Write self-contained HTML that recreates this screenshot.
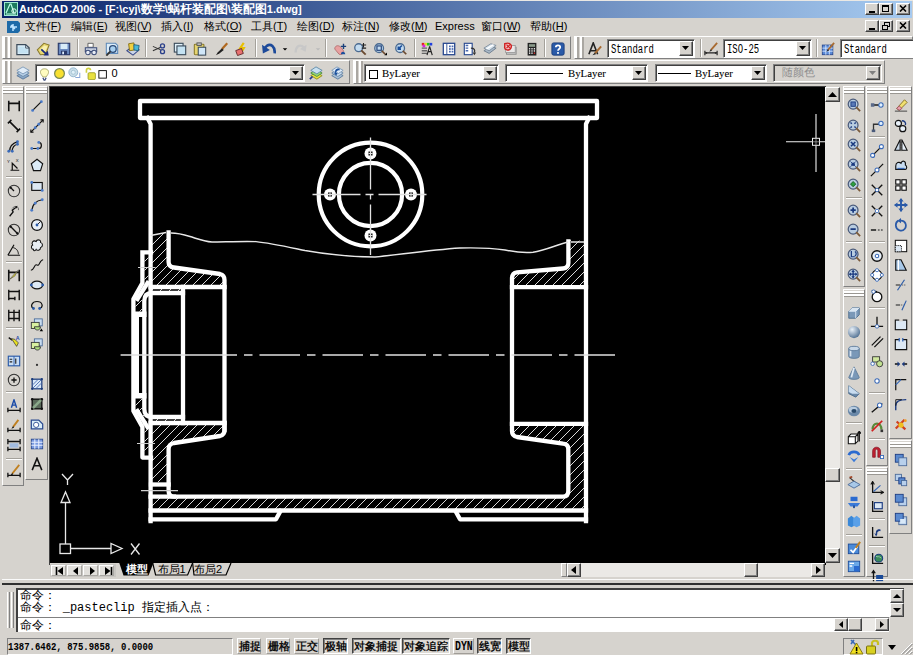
<!DOCTYPE html><html><head><meta charset="utf-8"><style>
html,body{margin:0;padding:0;}
body{width:913px;height:655px;overflow:hidden;position:relative;background:#d6d3ce;font-family:"Liberation Sans",sans-serif;}
</style></head><body>
<div style="position:absolute;left:0px;top:0px;width:913px;height:1px;background:#eae8e4"></div>
<div style="position:absolute;left:2px;top:1px;width:910px;height:16.5px;background:linear-gradient(to right,#0a246a,#a6caf0)"></div>
<svg style="position:absolute;left:4px;top:2px;" width="14" height="14" viewBox="0 0 14 14"><rect x="0.5" y="0.5" width="13" height="13" fill="#1d7a5e" stroke="#9ee8d0" stroke-width="1"/><path d="M2 11 L6 2 L7 2 L10 11" stroke="#bfffe8" fill="none" stroke-width="1.2"/><circle cx="10" cy="9" r="2.2" stroke="#eafff6" fill="none"/><line x1="2" y1="12" x2="12" y2="12" stroke="#bfffe8"/></svg>
<div style="position:absolute;left:19px;top:3.3px;font-family:'Liberation Sans', sans-serif;font-size:11px;line-height:1;color:#fff;white-space:nowrap;font-weight:bold;letter-spacing:0px">AutoCAD 2006 - [F:\cyj\<span style="font-size:12px">数学</span>\<span style="font-size:12px">蜗杆装配图</span>\<span style="font-size:12px">装配图</span>1.dwg]</div>
<div style="position:absolute;left:865px;top:3px;width:12px;height:10px;border:1px solid;border-color:#fff #404040 #404040 #fff;background:#d6d3ce;box-shadow:inset -1px -1px #808080;"></div>
<div style="position:absolute;left:869px;top:11px;width:6px;height:2px;background:#000"></div>
<div style="position:absolute;left:879px;top:3px;width:12px;height:10px;border:1px solid;border-color:#fff #404040 #404040 #fff;background:#d6d3ce;box-shadow:inset -1px -1px #808080;"></div>
<div style="position:absolute;left:882px;top:5px;width:7px;height:7px;border:1px solid #000;border-top-width:2px;box-sizing:border-box"></div>
<div style="position:absolute;left:896px;top:3px;width:12px;height:10px;border:1px solid;border-color:#fff #404040 #404040 #fff;background:#d6d3ce;box-shadow:inset -1px -1px #808080;"></div>
<svg style="position:absolute;left:899px;top:5px;" width="8" height="7" viewBox="0 0 8 7"><path d="M1 0.5 L7 6.5 M7 0.5 L1 6.5" stroke="#000" stroke-width="1.6"/></svg>
<svg style="position:absolute;left:6px;top:20px;" width="15" height="13" viewBox="0 0 15 13"><path d="M1 1 H12 L14 3 V11 L12 13 H1 Z" fill="#1d6aa8"/><path d="M4 7 H11 M7 4 V11 M5 5 L9 9" stroke="#bfe4ff" stroke-width="1.5"/></svg>
<div style="position:absolute;left:25px;top:21px;font-family:'Liberation Sans', sans-serif;font-size:11px;line-height:1;color:#000;white-space:nowrap;">文件(<u>F</u>)</div>
<div style="position:absolute;left:71px;top:21px;font-family:'Liberation Sans', sans-serif;font-size:11px;line-height:1;color:#000;white-space:nowrap;">编辑(<u>E</u>)</div>
<div style="position:absolute;left:115px;top:21px;font-family:'Liberation Sans', sans-serif;font-size:11px;line-height:1;color:#000;white-space:nowrap;">视图(<u>V</u>)</div>
<div style="position:absolute;left:161px;top:21px;font-family:'Liberation Sans', sans-serif;font-size:11px;line-height:1;color:#000;white-space:nowrap;">插入(<u>I</u>)</div>
<div style="position:absolute;left:204px;top:21px;font-family:'Liberation Sans', sans-serif;font-size:11px;line-height:1;color:#000;white-space:nowrap;">格式(<u>O</u>)</div>
<div style="position:absolute;left:251px;top:21px;font-family:'Liberation Sans', sans-serif;font-size:11px;line-height:1;color:#000;white-space:nowrap;">工具(<u>T</u>)</div>
<div style="position:absolute;left:297px;top:21px;font-family:'Liberation Sans', sans-serif;font-size:11px;line-height:1;color:#000;white-space:nowrap;">绘图(<u>D</u>)</div>
<div style="position:absolute;left:342px;top:21px;font-family:'Liberation Sans', sans-serif;font-size:11px;line-height:1;color:#000;white-space:nowrap;">标注(<u>N</u>)</div>
<div style="position:absolute;left:389px;top:21px;font-family:'Liberation Sans', sans-serif;font-size:11px;line-height:1;color:#000;white-space:nowrap;">修改(<u>M</u>)</div>
<div style="position:absolute;left:435px;top:21px;font-family:'Liberation Sans', sans-serif;font-size:11px;line-height:1;color:#000;white-space:nowrap;">Express</div>
<div style="position:absolute;left:481px;top:21px;font-family:'Liberation Sans', sans-serif;font-size:11px;line-height:1;color:#000;white-space:nowrap;">窗口(<u>W</u>)</div>
<div style="position:absolute;left:530px;top:21px;font-family:'Liberation Sans', sans-serif;font-size:11px;line-height:1;color:#000;white-space:nowrap;">帮助(<u>H</u>)</div>
<div style="position:absolute;left:865px;top:20px;width:12px;height:10px;border:1px solid;border-color:#fff #404040 #404040 #fff;background:#d6d3ce;box-shadow:inset -1px -1px #808080;"></div>
<div style="position:absolute;left:869px;top:28px;width:6px;height:2px;background:#000"></div>
<div style="position:absolute;left:879px;top:20px;width:12px;height:10px;border:1px solid;border-color:#fff #404040 #404040 #fff;background:#d6d3ce;box-shadow:inset -1px -1px #808080;"></div>
<svg style="position:absolute;left:882px;top:22px;" width="8" height="8" viewBox="0 0 8 8"><rect x="2.5" y="0.5" width="5" height="4" fill="none" stroke="#000"/><rect x="0.5" y="3.5" width="5" height="4" fill="#d6d3ce" stroke="#000"/></svg>
<div style="position:absolute;left:896px;top:20px;width:12px;height:10px;border:1px solid;border-color:#fff #404040 #404040 #fff;background:#d6d3ce;box-shadow:inset -1px -1px #808080;"></div>
<svg style="position:absolute;left:899px;top:22px;" width="8" height="7" viewBox="0 0 8 7"><path d="M1 0.5 L7 6.5 M7 0.5 L1 6.5" stroke="#000" stroke-width="1.6"/></svg>
<div style="position:absolute;left:2px;top:36px;width:567px;height:21px;border:1px solid;border-color:#fff #808080 #808080 #fff;background:#d6d3ce;"></div>
<div style="position:absolute;left:3px;top:37px;width:4px;height:21px;border-left:2px solid #fff;border-right:2px solid #aaa7a2;box-sizing:border-box"></div>
<div style="position:absolute;left:8px;top:37px;width:4px;height:21px;border-left:2px solid #fff;border-right:2px solid #aaa7a2;box-sizing:border-box"></div>
<div style="position:absolute;left:574px;top:36px;width:337px;height:21px;border:1px solid;border-color:#fff #808080 #808080 #fff;background:#d6d3ce;"></div>
<div style="position:absolute;left:575px;top:37px;width:4px;height:21px;border-left:2px solid #fff;border-right:2px solid #aaa7a2;box-sizing:border-box"></div>
<div style="position:absolute;left:580px;top:37px;width:4px;height:21px;border-left:2px solid #fff;border-right:2px solid #aaa7a2;box-sizing:border-box"></div>
<div style="position:absolute;left:2px;top:60px;width:346px;height:22px;border:1px solid;border-color:#fff #808080 #808080 #fff;background:#d6d3ce;"></div>
<div style="position:absolute;left:3px;top:61px;width:4px;height:22px;border-left:2px solid #fff;border-right:2px solid #aaa7a2;box-sizing:border-box"></div>
<div style="position:absolute;left:8px;top:61px;width:4px;height:22px;border-left:2px solid #fff;border-right:2px solid #aaa7a2;box-sizing:border-box"></div>
<div style="position:absolute;left:353px;top:60px;width:530px;height:22px;border:1px solid;border-color:#fff #808080 #808080 #fff;background:#d6d3ce;"></div>
<div style="position:absolute;left:354px;top:61px;width:4px;height:22px;border-left:2px solid #fff;border-right:2px solid #aaa7a2;box-sizing:border-box"></div>
<div style="position:absolute;left:359px;top:61px;width:4px;height:22px;border-left:2px solid #fff;border-right:2px solid #aaa7a2;box-sizing:border-box"></div>
<div style="position:absolute;left:607px;top:39px;width:86px;height:17px;border:1px solid;border-color:#808080 #fff #fff #808080;background:#fff;box-shadow:inset 1px 1px #404040;"></div>
<div style="position:absolute;left:679px;top:41px;width:12px;height:13px;border:1px solid;border-color:#fff #404040 #404040 #fff;background:#d6d3ce;box-shadow:inset -1px -1px #808080;"></div>
<svg style="position:absolute;left:682px;top:46px;" width="8" height="4" viewBox="0 0 8 4"><path d="M0 0 H7 L3.5 4 Z" fill="#000"/></svg>
<div style="position:absolute;left:611px;top:43.5px;font-family:'Liberation Mono', monospace;font-size:12px;line-height:1;color:#000;white-space:nowrap;transform:scaleX(0.745);transform-origin:0 0;">Standard</div>
<div style="position:absolute;left:723px;top:39px;width:87px;height:17px;border:1px solid;border-color:#808080 #fff #fff #808080;background:#fff;box-shadow:inset 1px 1px #404040;"></div>
<div style="position:absolute;left:796px;top:41px;width:12px;height:13px;border:1px solid;border-color:#fff #404040 #404040 #fff;background:#d6d3ce;box-shadow:inset -1px -1px #808080;"></div>
<svg style="position:absolute;left:799px;top:46px;" width="8" height="4" viewBox="0 0 8 4"><path d="M0 0 H7 L3.5 4 Z" fill="#000"/></svg>
<div style="position:absolute;left:727px;top:43.5px;font-family:'Liberation Mono', monospace;font-size:12px;line-height:1;color:#000;white-space:nowrap;transform:scaleX(0.745);transform-origin:0 0;">ISO-25</div>
<div style="position:absolute;left:840px;top:39px;width:98px;height:17px;border:1px solid;border-color:#808080 #fff #fff #808080;background:#fff;box-shadow:inset 1px 1px #404040;"></div>
<div style="position:absolute;left:924px;top:41px;width:12px;height:13px;border:1px solid;border-color:#fff #404040 #404040 #fff;background:#d6d3ce;box-shadow:inset -1px -1px #808080;"></div>
<svg style="position:absolute;left:927px;top:46px;" width="8" height="4" viewBox="0 0 8 4"><path d="M0 0 H7 L3.5 4 Z" fill="#000"/></svg>
<div style="position:absolute;left:844px;top:43.5px;font-family:'Liberation Mono', monospace;font-size:12px;line-height:1;color:#000;white-space:nowrap;transform:scaleX(0.745);transform-origin:0 0;">Standard</div>
<div style="position:absolute;left:35px;top:64px;width:268px;height:16px;border:1px solid;border-color:#808080 #fff #fff #808080;background:#fff;box-shadow:inset 1px 1px #404040;"></div>
<div style="position:absolute;left:289px;top:66px;width:12px;height:12px;border:1px solid;border-color:#fff #404040 #404040 #fff;background:#d6d3ce;box-shadow:inset -1px -1px #808080;"></div>
<svg style="position:absolute;left:292px;top:71px;" width="8" height="4" viewBox="0 0 8 4"><path d="M0 0 H7 L3.5 4 Z" fill="#000"/></svg>
<div style="position:absolute;left:364px;top:64px;width:133px;height:16px;border:1px solid;border-color:#808080 #fff #fff #808080;background:#fff;box-shadow:inset 1px 1px #404040;"></div>
<div style="position:absolute;left:483px;top:66px;width:12px;height:12px;border:1px solid;border-color:#fff #404040 #404040 #fff;background:#d6d3ce;box-shadow:inset -1px -1px #808080;"></div>
<svg style="position:absolute;left:486px;top:71px;" width="8" height="4" viewBox="0 0 8 4"><path d="M0 0 H7 L3.5 4 Z" fill="#000"/></svg>
<div style="position:absolute;left:505px;top:64px;width:141px;height:16px;border:1px solid;border-color:#808080 #fff #fff #808080;background:#fff;box-shadow:inset 1px 1px #404040;"></div>
<div style="position:absolute;left:632px;top:66px;width:12px;height:12px;border:1px solid;border-color:#fff #404040 #404040 #fff;background:#d6d3ce;box-shadow:inset -1px -1px #808080;"></div>
<svg style="position:absolute;left:635px;top:71px;" width="8" height="4" viewBox="0 0 8 4"><path d="M0 0 H7 L3.5 4 Z" fill="#000"/></svg>
<div style="position:absolute;left:655px;top:64px;width:110px;height:16px;border:1px solid;border-color:#808080 #fff #fff #808080;background:#fff;box-shadow:inset 1px 1px #404040;"></div>
<div style="position:absolute;left:751px;top:66px;width:12px;height:12px;border:1px solid;border-color:#fff #404040 #404040 #fff;background:#d6d3ce;box-shadow:inset -1px -1px #808080;"></div>
<svg style="position:absolute;left:754px;top:71px;" width="8" height="4" viewBox="0 0 8 4"><path d="M0 0 H7 L3.5 4 Z" fill="#000"/></svg>
<div style="position:absolute;left:773px;top:64px;width:107px;height:16px;border:1px solid;border-color:#808080 #fff #fff #808080;background:#d6d3ce;box-shadow:inset 1px 1px #404040;"></div>
<div style="position:absolute;left:866px;top:66px;width:12px;height:12px;border:1px solid;border-color:#fff #404040 #404040 #fff;background:#d6d3ce;box-shadow:inset -1px -1px #808080;"></div>
<svg style="position:absolute;left:869px;top:71px;" width="8" height="4" viewBox="0 0 8 4"><path d="M0 0 H7 L3.5 4 Z" fill="#808080"/></svg>
<div style="position:absolute;left:369px;top:69.5px;width:9px;height:9px;border:1.2px solid #000;box-sizing:border-box;background:#fff"></div>
<div style="position:absolute;left:382px;top:68px;font-family:'Liberation Serif', serif;font-size:10.8px;line-height:1;color:#000;white-space:nowrap;color:#000;-webkit-text-stroke:0.1px #000">ByLayer</div>
<div style="position:absolute;left:510px;top:72.5px;width:53px;height:1px;background:#000"></div>
<div style="position:absolute;left:568px;top:68px;font-family:'Liberation Serif', serif;font-size:10.8px;line-height:1;color:#000;white-space:nowrap;color:#000;-webkit-text-stroke:0.1px #000">ByLayer</div>
<div style="position:absolute;left:658px;top:72.5px;width:33px;height:1px;background:#000"></div>
<div style="position:absolute;left:695px;top:68px;font-family:'Liberation Serif', serif;font-size:10.8px;line-height:1;color:#000;white-space:nowrap;color:#000;-webkit-text-stroke:0.1px #000">ByLayer</div>
<div style="position:absolute;left:782px;top:67px;font-family:'Liberation Sans', sans-serif;font-size:11px;line-height:1;color:#909090;white-space:nowrap;">随颜色</div>
<svg style="position:absolute;left:16.0px;top:42.0px" width="14" height="14" viewBox="0 0 16 16"><path d="M1 3 H11 L15 6.5 V14.5 H1Z" fill="#e2f2fb" stroke="#3c4c5c" stroke-width="1.4"/><path d="M2.5 5 H10 V8 H13.5 V13 H2.5Z" fill="#c4e2f2"/><path d="M11 3 V7 H15" fill="none" stroke="#3c4c5c"/></svg>
<svg style="position:absolute;left:36.0px;top:42.0px" width="14" height="14" viewBox="0 0 16 16"><path d="M1.5 9 L9 1.5 L15 3.5 L11 14 L5 14.5Z" fill="#e8d870" stroke="#8a7a30" stroke-width="1.2"/><path d="M4 9.5 L9.5 4 L13 5 L10 12Z" fill="#f8f0b0"/><path d="M6 8.5 L11.5 13.5" stroke="#1a2a7a" stroke-width="2"/><path d="M14.5 15.5 L8.5 15.5 L13.5 10Z" fill="#1a2a7a"/></svg>
<svg style="position:absolute;left:57.0px;top:42.0px" width="14" height="14" viewBox="0 0 16 16"><rect x="1.5" y="1.5" width="13" height="13" fill="#6a8ac0" stroke="#2a3a6a" stroke-width="1.3"/><rect x="4" y="2" width="8" height="6" fill="#d8ecf8"/><rect x="4.5" y="10" width="7" height="4.5" fill="#2a3a6a"/><rect x="6" y="11" width="2" height="3" fill="#e0f0ff"/></svg>
<svg style="position:absolute;left:84.0px;top:42.0px" width="14" height="14" viewBox="0 0 16 16"><path d="M4.5 1.5 H10.5 V6 H4.5Z" fill="#fff" stroke="#555"/><path d="M1.5 6.5 H14.5 V11 H1.5Z" fill="#c8d0e0" stroke="#3c4c78" stroke-width="1.2"/><circle cx="4.5" cy="12" r="2.6" fill="#e8ecf4" stroke="#3c4c78" stroke-width="1.2"/><circle cx="11.5" cy="12" r="2.6" fill="#e8ecf4" stroke="#3c4c78" stroke-width="1.2"/></svg>
<svg style="position:absolute;left:105.0px;top:42.0px" width="14" height="14" viewBox="0 0 16 16"><path d="M1.5 1.5 H12 L14.5 4 V13 H1.5Z" fill="#dcecf8" stroke="#5c88b8" stroke-width="1.2"/><circle cx="9" cy="8" r="3.8" fill="#a8d0f0" stroke="#2c4c78" stroke-width="1.5"/><path d="M6.3 10.7 L1.5 15.5" stroke="#333" stroke-width="2.2"/></svg>
<svg style="position:absolute;left:126.0px;top:42.0px" width="14" height="14" viewBox="0 0 16 16"><path d="M1 10 L8 5 L15 9 L8 15Z" fill="#c8d4e8" stroke="#3a4a88" stroke-width="1.2"/><path d="M3 2 L9 1 L10 9 L4 10Z" fill="#f0d040" stroke="#806a10"/><path d="M9 3 L15 4 L14 10 L9 9Z" fill="#48b8d8" stroke="#20607a"/></svg>
<svg style="position:absolute;left:152.0px;top:42.0px" width="14" height="14" viewBox="0 0 16 16"><path d="M1 5 L10 9 M1 10 L10 6" stroke="#333" stroke-width="1.2"/><circle cx="12" cy="4.5" r="2.3" fill="none" stroke="#2a3f8a" stroke-width="1.5"/><circle cx="12" cy="11" r="2.3" fill="none" stroke="#2a3f8a" stroke-width="1.5"/></svg>
<svg style="position:absolute;left:173.0px;top:42.0px" width="14" height="14" viewBox="0 0 16 16"><rect x="1.5" y="1.5" width="10" height="10" fill="#e2f2fb" stroke="#3c4c5c" stroke-width="1.3"/><rect x="4.5" y="4.5" width="10" height="10" fill="#c4e2f2" stroke="#3c4c5c" stroke-width="1.3"/></svg>
<svg style="position:absolute;left:193.0px;top:42.0px" width="14" height="14" viewBox="0 0 16 16"><rect x="1.5" y="2.5" width="11" height="12" rx="1" fill="#e6d470" stroke="#8a7a28" stroke-width="1.2"/><rect x="4.5" y="1" width="5" height="3" fill="#bbb" stroke="#555"/><rect x="6" y="6" width="8.5" height="9" fill="#d0e6f8" stroke="#3c4c5c" stroke-width="1.2"/></svg>
<svg style="position:absolute;left:214.5px;top:42.0px" width="14" height="14" viewBox="0 0 16 16"><path d="M14 1.5 L8 8" stroke="#b06820" stroke-width="2.5"/><path d="M8 7 L3 12 L1 15 L5 13 L10 9Z" fill="#222"/></svg>
<svg style="position:absolute;left:235.0px;top:42.0px" width="14" height="14" viewBox="0 0 16 16"><path d="M10 1 L6 7 H10 L7 12" stroke="#e8c000" stroke-width="2.5" fill="none"/><rect x="1.5" y="8.5" width="7" height="6" fill="#e87070" stroke="#6a3030" transform="rotate(-20 5 11)"/></svg>
<svg style="position:absolute;left:261.5px;top:42.0px" width="14" height="14" viewBox="0 0 16 16"><path d="M14.5 13 C15 5 10 1.5 5.5 4.5 L3.5 6.5" stroke="#1d4a9a" stroke-width="3" fill="none"/><path d="M0 3 L1 13 L9 9Z" fill="#1d4a9a"/></svg>
<svg style="position:absolute;left:293.0px;top:42.0px" width="14" height="14" viewBox="0 0 16 16"><path d="M3 12 C3 5 7 3 11 5 L13 7" stroke="#c8c8c8" stroke-width="2.6" fill="none"/><path d="M15.5 3 L14.5 11 L8 8Z" fill="#c8c8c8"/></svg>
<svg style="position:absolute;left:333.0px;top:42.0px" width="14" height="14" viewBox="0 0 16 16"><path d="M2 8 C2 4 6 3 9 6 L12 10 C13 13 10 15 7 14 Z" fill="#e8a0a0" stroke="#b07070"/><path d="M12 2 V8 M9 5 H15" stroke="#1a3f7a" stroke-width="1.6"/><path d="M11 11 C13 11 14 12 14 14 H9 C9 12 10 11 11 11Z" fill="#1a4f9c"/></svg>
<svg style="position:absolute;left:353.0px;top:42.0px" width="14" height="14" viewBox="0 0 16 16"><circle cx="6.5" cy="6.5" r="4.5" fill="#c4dcf0" stroke="#4a6a90" stroke-width="1.5"/><path d="M9.5 9.5 L14.5 14.5" stroke="#6a4a30" stroke-width="2.2"/><path d="M12 1 V6 M10 3.5 H15 M10 7 H15" stroke="#222" stroke-width="1.2"/></svg>
<svg style="position:absolute;left:373.0px;top:42.0px" width="14" height="14" viewBox="0 0 16 16"><circle cx="7" cy="7" r="5" fill="#c4dcf0" stroke="#4a6a90" stroke-width="1.5"/><rect x="4.5" y="4.5" width="5" height="5" fill="none" stroke="#2a4a80" stroke-width="1.4"/><path d="M10 10 L14 14" stroke="#6a4a30" stroke-width="2"/><path d="M13 15 L16 15 L16 12Z" fill="#000"/></svg>
<svg style="position:absolute;left:393.5px;top:42.0px" width="14" height="14" viewBox="0 0 16 16"><circle cx="7" cy="7" r="5" fill="#c4dcf0" stroke="#4a6a90" stroke-width="1.5"/><path d="M9 4 L5 8 M5 5 V8 H8" stroke="#1a4f9c" stroke-width="2" fill="none"/><path d="M10 10 L14 14" stroke="#6a4a30" stroke-width="2"/></svg>
<svg style="position:absolute;left:420.0px;top:42.0px" width="14" height="14" viewBox="0 0 16 16"><rect x="2" y="1" width="3" height="3" fill="#e02020"/><rect x="5" y="1" width="3" height="3" fill="#e0e020"/><rect x="8" y="1" width="3" height="3" fill="#20c020"/><rect x="11" y="1" width="3" height="3" fill="#2040e0"/><rect x="3" y="3" width="3" height="3" fill="#e020e0"/><path d="M2 7 H8 M2 10 H8 M2 13 H8" stroke="#666" stroke-width="1.5"/><path d="M11 5 L8 15 M11 5 L14 15 M9 11 H13" stroke="#222" stroke-width="1.3"/></svg>
<svg style="position:absolute;left:442.0px;top:42.0px" width="14" height="14" viewBox="0 0 16 16"><rect x="1.5" y="1.5" width="13" height="13" fill="#fff" stroke="#2a4a90" stroke-width="1.5"/><path d="M5.5 2 V14" stroke="#2a4a90"/><rect x="8" y="4" width="2" height="2" fill="#4a6ab0"/><rect x="11" y="4" width="2" height="2" fill="#4a6ab0"/><rect x="8" y="7" width="2" height="2" fill="#4a6ab0"/><rect x="11" y="7" width="2" height="2" fill="#4a6ab0"/><rect x="8" y="10" width="2" height="2" fill="#4a6ab0"/><rect x="11" y="10" width="2" height="2" fill="#4a6ab0"/></svg>
<svg style="position:absolute;left:463.0px;top:42.0px" width="14" height="14" viewBox="0 0 16 16"><rect x="1.5" y="1.5" width="9" height="13" fill="#fff" stroke="#2a4a90" stroke-width="1.3"/><path d="M3 4 H6 M3 7 H6 M3 10 H6" stroke="#4a6ab0" stroke-width="1.5"/><path d="M9 7 C13 7 14 9 13 12" stroke="#333" stroke-width="1.5" fill="none"/><path d="M11 12 H15 L13 15Z" fill="#333"/></svg>
<svg style="position:absolute;left:483.0px;top:42.0px" width="14" height="14" viewBox="0 0 16 16"><path d="M1 10 L9 5 L15 7 L7 13Z" fill="#a8b8c8" stroke="#6a7a8a"/><path d="M1 7 L9 2 L15 4 L7 10Z" fill="#d8e4ee" stroke="#7a8a9a"/><path d="M4 8 L12 3" stroke="#fff" stroke-width="1.5"/></svg>
<svg style="position:absolute;left:503.0px;top:42.0px" width="14" height="14" viewBox="0 0 16 16"><rect x="4" y="6" width="11" height="8" fill="#c8c8c8" stroke="#888"/><rect x="3" y="4" width="11" height="8" fill="#e8e8e8" stroke="#999"/><path d="M2 2 C7 0 11 3 9 7 C7 11 1 9 2 5Z" fill="#f0c0c0" stroke="#d02020" stroke-width="1.6"/><path d="M4 3 L8 7 M8 3 L4 7" stroke="#d02020" stroke-width="1.3"/></svg>
<svg style="position:absolute;left:525.0px;top:42.0px" width="14" height="14" viewBox="0 0 16 16"><rect x="3" y="1" width="10" height="14.5" fill="#222"/><rect x="4.5" y="2.5" width="7" height="3" fill="#8a9a8a"/><g fill="#fff"><rect x="4.5" y="7" width="1.5" height="1.5"/><rect x="7.25" y="7" width="1.5" height="1.5"/><rect x="10" y="7" width="1.5" height="1.5"/><rect x="4.5" y="9.5" width="1.5" height="1.5"/><rect x="7.25" y="9.5" width="1.5" height="1.5"/><rect x="10" y="9.5" width="1.5" height="1.5"/><rect x="4.5" y="12" width="1.5" height="1.5"/><rect x="7.25" y="12" width="1.5" height="1.5"/></g><rect x="10" y="12" width="1.5" height="1.5" fill="#e03030"/></svg>
<svg style="position:absolute;left:551.0px;top:42.0px" width="14" height="14" viewBox="0 0 16 16"><rect x="1" y="1" width="14" height="14" rx="2" fill="#2a5aa8" stroke="#183a78"/><path d="M5.5 6 C5.5 3 10.5 3 10.5 6 C10.5 8 8 8 8 10" stroke="#fff" stroke-width="2" fill="none"/><rect x="7" y="11.5" width="2" height="2" fill="#fff"/></svg>
<svg style="position:absolute;left:279.0px;top:43.0px" width="12" height="12" viewBox="0 0 16 16"><path d="M5 7 H11 L8 10Z" fill="#000"/></svg>
<svg style="position:absolute;left:312.0px;top:43.0px" width="12" height="12" viewBox="0 0 16 16"><path d="M5 7 H11 L8 10Z" fill="#bbb"/></svg>
<div style="position:absolute;left:77px;top:39px;width:2px;height:18px;border-left:1px solid #a4a19b;border-right:1px solid #fff;box-sizing:border-box"></div>
<div style="position:absolute;left:145px;top:39px;width:2px;height:18px;border-left:1px solid #a4a19b;border-right:1px solid #fff;box-sizing:border-box"></div>
<div style="position:absolute;left:254.5px;top:39px;width:2px;height:18px;border-left:1px solid #a4a19b;border-right:1px solid #fff;box-sizing:border-box"></div>
<div style="position:absolute;left:325px;top:39px;width:2px;height:18px;border-left:1px solid #a4a19b;border-right:1px solid #fff;box-sizing:border-box"></div>
<div style="position:absolute;left:414px;top:39px;width:2px;height:18px;border-left:1px solid #a4a19b;border-right:1px solid #fff;box-sizing:border-box"></div>
<div style="position:absolute;left:544px;top:39px;width:2px;height:18px;border-left:1px solid #a4a19b;border-right:1px solid #fff;box-sizing:border-box"></div>
<svg style="position:absolute;left:588.0px;top:42.0px" width="14" height="14" viewBox="0 0 16 16"><path d="M1 14 L6 1 L11 14 M3 10 H9" stroke="#222" stroke-width="1.8" fill="none"/><path d="M15 5 L8 13" stroke="#a86a30" stroke-width="2.2"/><path d="M8 12 L5 15 L9 14Z" fill="#222"/></svg>
<svg style="position:absolute;left:704.0px;top:42.0px" width="14" height="14" viewBox="0 0 16 16"><path d="M1 10 V15 M15 10 V15 M1 12.5 H15" stroke="#222" stroke-width="1.3"/><path d="M2 11 L4 12.5 L2 14Z M14 11 L12 12.5 L14 14Z" fill="#222"/><path d="M15 1 L8 9" stroke="#a86a30" stroke-width="2"/><path d="M8 8 L6 11 L9 10Z" fill="#222"/></svg>
<svg style="position:absolute;left:821.0px;top:42.0px" width="14" height="14" viewBox="0 0 16 16"><rect x="1.5" y="3.5" width="12" height="11" fill="#5a8ad8" stroke="#2a4a90"/><path d="M1.5 7 H13.5 M1.5 10.5 H13.5 M5.5 3.5 V14.5 M9.5 3.5 V14.5" stroke="#d8e8ff"/><path d="M15 1 L8 9" stroke="#a86a30" stroke-width="2"/><path d="M8 8 L6 11 L9 10Z" fill="#222"/></svg>
<div style="position:absolute;left:700px;top:39px;width:2px;height:18px;border-left:1px solid #a4a19b;border-right:1px solid #fff;box-sizing:border-box"></div>
<div style="position:absolute;left:816px;top:39px;width:2px;height:18px;border-left:1px solid #a4a19b;border-right:1px solid #fff;box-sizing:border-box"></div>
<svg style="position:absolute;left:16.0px;top:66.0px" width="14" height="14" viewBox="0 0 16 16"><path d="M1 11 L8 7 L15 11 L8 15Z" fill="#8aa8c8" stroke="#5a7898"/><path d="M1 8 L8 4 L15 8 L8 12Z" fill="#b8d0e8" stroke="#6a88a8"/><path d="M1 5 L8 1 L15 5 L8 9Z" fill="#e0ecf8" stroke="#7a98b8"/></svg>
<svg style="position:absolute;left:38.0px;top:67.5px" width="13" height="13" viewBox="0 0 16 16"><path d="M8 1 C3 1 2 5 4 8 L6 11 H10 L12 8 C14 5 13 1 8 1Z" fill="#fffcc0" stroke="#a0a060"/><path d="M6 12 L7.5 15 H8.5 L10 12" stroke="#3a4a7a" stroke-width="1.6" fill="none"/></svg>
<svg style="position:absolute;left:52.5px;top:67.0px" width="13" height="13" viewBox="0 0 16 16"><circle cx="8" cy="8" r="6" fill="#f8e030" stroke="#7a8a50" stroke-width="1.5"/></svg>
<svg style="position:absolute;left:67.5px;top:67.0px" width="13" height="13" viewBox="0 0 16 16"><circle cx="6.5" cy="6.5" r="5.5" fill="#c8dce8" stroke="#8ab0c8"/><circle cx="6.5" cy="6.5" r="2.5" fill="#e0f0f8" stroke="#a0c0d0"/><path d="M9 13 H14.5 V7" stroke="#8aa8d8" stroke-width="1.3" fill="none"/></svg>
<svg style="position:absolute;left:84.0px;top:67.0px" width="13" height="13" viewBox="0 0 16 16"><path d="M3 7 V4 C3 1 8 1 8 4" stroke="#d0d040" stroke-width="2" fill="none"/><rect x="5" y="7" width="9" height="8.5" rx="1.5" fill="#e8e040" stroke="#9a9a20"/></svg>
<svg style="position:absolute;left:97.0px;top:68.0px" width="12" height="12" viewBox="0 0 16 16"><rect x="2.5" y="3.5" width="10" height="10" fill="#fff" stroke="#000" stroke-width="1.2"/></svg>
<div style="position:absolute;left:111.5px;top:68px;font-family:'Liberation Sans', sans-serif;font-size:11px;line-height:1;color:#000;white-space:nowrap;">0</div>
<svg style="position:absolute;left:309.0px;top:66.0px" width="14" height="14" viewBox="0 0 16 16"><path d="M2 11 L8 7 L15 11 L9 15Z" fill="#e8e040" stroke="#8a8a20"/><path d="M2 8 L8 4 L15 8 L9 12Z" fill="#98d870" stroke="#4a8a40"/><path d="M2 5 L8 1 L15 5 L9 9Z" fill="#c8e0f0" stroke="#5a88a8"/><path d="M1 15 L4 12" stroke="#2a3a8a" stroke-width="2"/></svg>
<svg style="position:absolute;left:330.0px;top:66.0px" width="14" height="14" viewBox="0 0 16 16"><path d="M2 11 L8 7 L15 11 L9 15Z" fill="#a8c0d8" stroke="#5a7898"/><path d="M2 8 L8 4 L15 8 L9 12Z" fill="#c8dcf0" stroke="#6a88a8"/><path d="M2 5 L8 1 L15 5 L9 9Z" fill="#e0ecf8" stroke="#7a98b8"/><path d="M11 3 C7 2 5 5 6 8 L4 7 L7 11 L9 7 L7 8 C7 6 9 4 11 5Z" fill="#1a4f9c"/></svg>
<div style="position:absolute;left:49px;top:86px;width:777px;height:478.5px;background:#000;border-left:1px solid #404040;border-top:1px solid #404040;box-sizing:border-box"></div>
<svg style="position:absolute;left:50px;top:87px" width="775" height="476" viewBox="50 87 775 476"><defs><pattern id="hp" patternUnits="userSpaceOnUse" width="9" height="9" patternTransform="translate(1,0)"><path d="M-1,10 L10,-1 M-10,10 L1,-1 M8,10 L19,-1" stroke="#d8d8d8" stroke-width="1"/></pattern></defs><polygon points="150.6,236 168.6,232 168.6,263 173,267 222,274 224.5,279 224.5,287 150.6,287" fill="url(#hp)"/><polygon points="151,288 183,288 183,292 151,292" fill="url(#hp)"/><polygon points="151,418 183,418 183,422 151,422" fill="url(#hp)"/><polygon points="150.6,423 224.5,423 224.5,431 222,436 173,443 168.6,447 168.6,482 150.6,482" fill="url(#hp)"/><polygon points="150.6,496.6 586,496.6 586,510.5 150.6,510.5" fill="url(#hp)"/><polygon points="512,424 586,424 586,497 568.3,497 568.3,449 563,443.6 517,437 512,431" fill="url(#hp)"/><polygon points="568.4,240 586,241 586,287 512,287 512,278 517,272.4 563,268.5 568.4,263" fill="url(#hp)"/><polygon points="144.5,255 148.5,255 148.5,283 146,290 142,300 142,311.5 135.5,311.5 135.5,299 144.5,283" fill="url(#hp)"/><polygon points="144.5,455 148.5,455 148.5,427 146,420 142,410 142,398.5 135.5,398.5 135.5,411 144.5,427" fill="url(#hp)"/><path d="M140,101 H597 V118 H140 Z" stroke="#fff" fill="none" stroke-width="4.3" stroke-linejoin="round" stroke-linecap="square"/><path d="M147.5,118 L150.6,124 V521" stroke="#fff" fill="none" stroke-width="4.3" stroke-linejoin="round" stroke-linecap="square"/><path d="M589,118 L586,124 V521" stroke="#fff" fill="none" stroke-width="4.3" stroke-linejoin="round" stroke-linecap="square"/><path d="M150.6,519.3 H276 L280.5,511" stroke="#fff" fill="none" stroke-width="4.3" stroke-linejoin="round" stroke-linecap="square"/><path d="M455.5,511 L460,519.3 H586" stroke="#fff" fill="none" stroke-width="4.3" stroke-linejoin="round" stroke-linecap="square"/><path d="M150.6,510.5 H586" stroke="#fff" fill="none" stroke-width="4.3" stroke-linejoin="round" stroke-linecap="square"/><path d="M224.5,423 V430 Q224.5,435 220,436 L174,443 Q168.6,444 168.6,449 V491 Q168.6,496.6 174,496.6 H563 Q568.3,496.6 568.3,491 V449 Q568.3,444 563,443.6 L517,437 Q512,436 512,431 V278 Q512.3,273 517,272.4 L563,268.5 Q568.4,268 568.4,263 V241.5" stroke="#fff" fill="none" stroke-width="4.3" stroke-linejoin="round" stroke-linecap="square"/><path d="M168.6,232.5 V262 Q168.6,267 174,267.5 L220,274 Q224.5,275 224.5,280 V430" stroke="#fff" fill="none" stroke-width="4.3" stroke-linejoin="round" stroke-linecap="square"/><path d="M150.6,287 H224.5" stroke="#fff" fill="none" stroke-width="4.3" stroke-linejoin="round" stroke-linecap="square"/><path d="M150.6,423 H224.5" stroke="#fff" fill="none" stroke-width="4.3" stroke-linejoin="round" stroke-linecap="square"/><path d="M512,287.2 H586" stroke="#fff" fill="none" stroke-width="4.3" stroke-linejoin="round" stroke-linecap="square"/><path d="M512,423.8 H586" stroke="#fff" fill="none" stroke-width="4.3" stroke-linejoin="round" stroke-linecap="square"/><path d="M183,287 V423" stroke="#fff" fill="none" stroke-width="4.3" stroke-linejoin="round" stroke-linecap="square"/><path d="M183,293 H152 Q144.3,293 144.3,301 V409 Q144.3,417 152,417 H183" stroke="#fff" fill="none" stroke-width="4.3" stroke-linejoin="round" stroke-linecap="square"/><path d="M142.4,252.4 H151 M142.4,252.4 V283 L133.4,299 V411 L142.4,427 V457.6 H151" stroke="#fff" fill="none" stroke-width="4.3" stroke-linejoin="round" stroke-linecap="square"/><path d="M147.5,283 L137.5,299" stroke="#fff" fill="none" stroke-width="4.3" stroke-linejoin="round" stroke-linecap="square"/><path d="M147.5,427 L137.5,411" stroke="#fff" fill="none" stroke-width="4.3" stroke-linejoin="round" stroke-linecap="square"/><path d="M151,484.5 H168.6" stroke="#fff" fill="none" stroke-width="4.3" stroke-linejoin="round" stroke-linecap="square"/><path d="M150.6,496.6 H174" stroke="#fff" fill="none" stroke-width="4.3" stroke-linejoin="round" stroke-linecap="square"/><path d="M137,314 V396" stroke="#fff" stroke-width="4"/><path d="M132,314.2 H146.5 M132,395.8 H146.5" stroke="#fff" stroke-width="5.5"/><circle cx="370.5" cy="194.5" r="51.8" stroke="#fff" fill="none" stroke-width="4.2"/><circle cx="370.5" cy="194.5" r="31.6" stroke="#fff" fill="none" stroke-width="4.2"/><circle cx="370.5" cy="153.5" r="6" fill="#fff"/><rect x="368.5" y="151.5" width="4" height="4" fill="#000"/><path d="M368.5,153.5 H372.5 M370.5,151.5 V155.5" stroke="#fff" stroke-width="0.9"/><circle cx="370.5" cy="235.5" r="6" fill="#fff"/><rect x="368.5" y="233.5" width="4" height="4" fill="#000"/><path d="M368.5,235.5 H372.5 M370.5,233.5 V237.5" stroke="#fff" stroke-width="0.9"/><circle cx="330.0" cy="194.5" r="6" fill="#fff"/><rect x="328.0" y="192.5" width="4" height="4" fill="#000"/><path d="M328.0,194.5 H332.0 M330.0,192.5 V196.5" stroke="#fff" stroke-width="0.9"/><circle cx="411.0" cy="194.5" r="6" fill="#fff"/><rect x="409.0" y="192.5" width="4" height="4" fill="#000"/><path d="M409.0,194.5 H413.0 M411.0,192.5 V196.5" stroke="#fff" stroke-width="0.9"/><path d="M370.5,137.5 V255" stroke="#e0e0e0" stroke-width="1.3" fill="none" stroke-dasharray="52 5 5 5" stroke-dashoffset="0"/><path d="M312.5,194.5 H430" stroke="#e0e0e0" stroke-width="1.3" fill="none" stroke-dasharray="48 5 8 5" stroke-dashoffset="0"/><path d="M150.6,235.5 L166,232.5 M171,233 C178,233 182,234 190,236.5 C198,239 204,241.5 212,242 C222,242 245,241 256,241.6 C270,243 288,247 305,250.5 C325,254 345,257 375,257 C400,254.5 430,250 460,248 C480,247.5 495,248.5 505,250 C515,252 525,253 533,252.2 C545,250.5 556,245 568,242 M571,242 H584" stroke="#e8e8e8" stroke-width="1.4" fill="none"/><path d="M120.6,355 H236" stroke="#e0e0e0" stroke-width="1.3" fill="none"/><path d="M236,355 H616" stroke="#e0e0e0" stroke-width="1.3" fill="none" stroke-dasharray="40.5 7 8.5 7" stroke-dashoffset="39.5"/><path d="M138,267.5 H155.5 M137,443.5 H155 M141,490.6 H178" stroke="#d0d0d0" stroke-width="1.2"/><rect x="60" y="544" width="10.5" height="9.5" stroke="#e8e8e8" stroke-width="1.3" fill="none"/><path d="M65.5,544 V502.5 M61,502.5 H70 L65.5,492 Z" stroke="#e8e8e8" stroke-width="1.3" fill="none"/><path d="M70.5,548.5 H111 M111,543.5 V553.5 L122,548.5 Z" stroke="#e8e8e8" stroke-width="1.3" fill="none"/><path d="M62,474 L67.5,480 L73,474 M67.5,480 V485" stroke="#e8e8e8" stroke-width="1.3" fill="none"/><path d="M131,543.5 L139.5,554.5 M139.5,543.5 L131,554.5" stroke="#e8e8e8" stroke-width="1.3" fill="none"/><path d="M816,114 V138.5 M816,145.5 V172 M786,141.8 H812.5 M819.5,141.8 H826" stroke="#f0f0f0" stroke-width="1.1"/><rect x="812.5" y="138.3" width="7" height="7" stroke="#f0f0f0" stroke-width="1" fill="none"/><path d="M816,138.3 V145.3 M812.5,141.8 H819.5" stroke="#a0a0a0" stroke-width="0.8"/></svg>
<div style="position:absolute;left:2px;top:86px;width:20px;height:398px;border:1px solid;border-color:#fff #808080 #808080 #fff;background:#d6d3ce;"></div>
<div style="position:absolute;left:3px;top:88px;width:20px;height:3px;border-top:2px solid #fff;border-bottom:1px solid #9a9792;box-sizing:border-box"></div>
<div style="position:absolute;left:3px;top:91px;width:20px;height:3px;border-top:2px solid #fff;border-bottom:1px solid #9a9792;box-sizing:border-box"></div>
<div style="position:absolute;left:25px;top:86px;width:21px;height:392px;border:1px solid;border-color:#fff #808080 #808080 #fff;background:#d6d3ce;"></div>
<div style="position:absolute;left:26px;top:88px;width:21px;height:3px;border-top:2px solid #fff;border-bottom:1px solid #9a9792;box-sizing:border-box"></div>
<div style="position:absolute;left:26px;top:91px;width:21px;height:3px;border-top:2px solid #fff;border-bottom:1px solid #9a9792;box-sizing:border-box"></div>
<svg style="position:absolute;left:6.5px;top:99.0px" width="14" height="14" viewBox="0 0 16 16"><path d="M2 2 V14 M14 2 V14 M2 5 H14" stroke="#111" stroke-width="1.8"/></svg>
<svg style="position:absolute;left:6.5px;top:118.5px" width="14" height="14" viewBox="0 0 16 16"><path d="M1 5 L5 1 M11 15 L15 11 M3 3 L13 13" stroke="#111" stroke-width="1.8"/></svg>
<svg style="position:absolute;left:6.5px;top:138.5px" width="14" height="14" viewBox="0 0 16 16"><path d="M3 14 C3 8 6 5 12 3 M6 14 C6 10 8 7 12 6" stroke="#111" stroke-width="1.4" fill="none"/><circle cx="2" cy="14" r="1.6" fill="#3a6ab8"/><circle cx="12" cy="3" r="1.6" fill="#3a6ab8"/><circle cx="6" cy="14" r="1.6" fill="#3a6ab8"/><circle cx="12" cy="6" r="1.6" fill="#3a6ab8"/></svg>
<svg style="position:absolute;left:6.5px;top:158.3px" width="14" height="14" viewBox="0 0 16 16"><path d="M4 14 H14 M6 14 V6 L12 12" stroke="#111" stroke-width="1.4" fill="none"/><text x="0" y="6" font-size="5" fill="#111">Y</text><text x="10" y="5" font-size="5" fill="#111">X</text></svg>
<div style="position:absolute;left:5.5px;top:176px;width:16px;height:2px;border-top:1px solid #a4a19b;border-bottom:1px solid #fff;box-sizing:border-box"></div>
<svg style="position:absolute;left:6.5px;top:183.8px" width="14" height="14" viewBox="0 0 16 16"><circle cx="8" cy="8" r="6.5" fill="none" stroke="#333" stroke-width="1.2"/><path d="M4 4 L8 8" stroke="#111" stroke-width="1.5"/><path d="M3 3 L6 4 L4 6Z" fill="#111"/></svg>
<svg style="position:absolute;left:6.5px;top:203.5px" width="14" height="14" viewBox="0 0 16 16"><path d="M3 14 L7 9 L6 7 L10 4" stroke="#111" stroke-width="1.5" fill="none"/><path d="M6 5 C9 1 14 3 13 7" stroke="#555" fill="none"/><path d="M9 3 L12 2 L11 5Z" fill="#111"/></svg>
<svg style="position:absolute;left:6.5px;top:223.0px" width="14" height="14" viewBox="0 0 16 16"><circle cx="8" cy="8" r="6.5" fill="none" stroke="#333" stroke-width="1.2"/><path d="M3.5 3.5 L12.5 12.5" stroke="#111" stroke-width="1.5"/><path d="M3 3 L6 4 L4 6Z M13 13 L10 12 L12 10Z" fill="#111"/></svg>
<svg style="position:absolute;left:6.5px;top:243.0px" width="14" height="14" viewBox="0 0 16 16"><path d="M1 14 H15 M1 14 L8 2" stroke="#111" stroke-width="1.4"/><path d="M6 5 C11 6 13 9 13 13" stroke="#111" fill="none"/></svg>
<div style="position:absolute;left:5.5px;top:261px;width:16px;height:2px;border-top:1px solid #a4a19b;border-bottom:1px solid #fff;box-sizing:border-box"></div>
<svg style="position:absolute;left:6.5px;top:268.0px" width="14" height="14" viewBox="0 0 16 16"><path d="M2 2 V15 M14 2 V15 M2 5 H14" stroke="#111" stroke-width="1.8"/><path d="M3 13 L12 3 L9 9Z" fill="#f0e020" stroke="#555" stroke-width="0.8"/></svg>
<svg style="position:absolute;left:6.5px;top:288.0px" width="14" height="14" viewBox="0 0 16 16"><path d="M2 2 V14 M14 2 V14 M2 4 H14 M2 12 H9 M9 10 V14" stroke="#111" stroke-width="1.6"/></svg>
<svg style="position:absolute;left:6.5px;top:307.8px" width="14" height="14" viewBox="0 0 16 16"><path d="M2 2 V15 M14 2 V15 M8 2 V15 M2 5 H14 M2 12 H14" stroke="#111" stroke-width="1.6"/></svg>
<div style="position:absolute;left:5.5px;top:327px;width:16px;height:2px;border-top:1px solid #a4a19b;border-bottom:1px solid #fff;box-sizing:border-box"></div>
<svg style="position:absolute;left:6.5px;top:334.5px" width="14" height="14" viewBox="0 0 16 16"><path d="M2 3 L6 6" stroke="#111" stroke-width="1.5"/><path d="M5 4 L11 13 L13 9 L9 5Z" fill="#e8e020" stroke="#333" stroke-width="0.8"/><text x="10" y="6" font-size="6" fill="#2a4aa8" font-weight="bold">A</text></svg>
<svg style="position:absolute;left:6.5px;top:353.5px" width="14" height="14" viewBox="0 0 16 16"><rect x="1.5" y="2.5" width="13" height="11" fill="#c8ddf4" stroke="#2a5aa8" stroke-width="1.3"/><path d="M8 2.5 V13.5" stroke="#2a5aa8"/><path d="M3 6 H6 M3 9 H6 M10 5 V11" stroke="#222" stroke-width="1.3"/></svg>
<svg style="position:absolute;left:6.5px;top:373.0px" width="14" height="14" viewBox="0 0 16 16"><circle cx="8" cy="8" r="6.5" fill="none" stroke="#333" stroke-width="1.2"/><path d="M5 8 H11 M8 5 V11" stroke="#111" stroke-width="1.5"/></svg>
<div style="position:absolute;left:5.5px;top:391px;width:16px;height:2px;border-top:1px solid #a4a19b;border-bottom:1px solid #fff;box-sizing:border-box"></div>
<svg style="position:absolute;left:6.5px;top:399.0px" width="14" height="14" viewBox="0 0 16 16"><path d="M1 13 H15 M1 10 V15 M15 10 V15" stroke="#111" stroke-width="1.5"/><path d="M5 10 L8 1 L11 10 M6 7 H10" stroke="#1a4aa8" stroke-width="1.6" fill="none"/></svg>
<svg style="position:absolute;left:6.5px;top:419.0px" width="14" height="14" viewBox="0 0 16 16"><path d="M1 13 H15 M1 10 V15 M15 10 V15" stroke="#111" stroke-width="1.5"/><path d="M13 1 L7 9" stroke="#c08020" stroke-width="2.2"/><path d="M7 8 L5 11 L8 10Z" fill="#111"/></svg>
<svg style="position:absolute;left:6.5px;top:437.6px" width="14" height="14" viewBox="0 0 16 16"><path d="M1 13 H15 M1 10 V15 M15 10 V15 M1 4 H15 M1 1 V7 M15 1 V7" stroke="#111" stroke-width="1.5"/><path d="M3 6 H13 V11 H3Z" fill="#8ab0e8" opacity="0.7"/></svg>
<div style="position:absolute;left:5.5px;top:457.5px;width:16px;height:2px;border-top:1px solid #a4a19b;border-bottom:1px solid #fff;box-sizing:border-box"></div>
<svg style="position:absolute;left:6.5px;top:464.0px" width="14" height="14" viewBox="0 0 16 16"><path d="M1 13 H15 M1 10 V15 M15 10 V15" stroke="#111" stroke-width="1.5"/><path d="M14 1 L6 11" stroke="#c08020" stroke-width="2"/><path d="M6 10 L4 13 L7 12Z" fill="#111"/></svg>
<svg style="position:absolute;left:29.5px;top:99.0px" width="14" height="14" viewBox="0 0 16 16"><path d="M3 13 L13 3" stroke="#111" stroke-width="1.4"/><circle cx="3" cy="13" r="1.6" fill="#4a7ac8"/><circle cx="13" cy="3" r="1.6" fill="#4a7ac8"/></svg>
<svg style="position:absolute;left:29.5px;top:118.5px" width="14" height="14" viewBox="0 0 16 16"><path d="M1 15 L15 1" stroke="#111" stroke-width="1.4"/><path d="M12 1 H15 V4 M1 12 V15 H4" stroke="#111" stroke-width="1.3" fill="none"/><circle cx="6" cy="10" r="1.6" fill="#4a7ac8"/><circle cx="10" cy="6" r="1.6" fill="#4a7ac8"/></svg>
<svg style="position:absolute;left:29.5px;top:138.0px" width="14" height="14" viewBox="0 0 16 16"><path d="M2 12 H10 C14 12 14 5 10 5" stroke="#111" stroke-width="1.4" fill="none"/><circle cx="2" cy="12" r="1.6" fill="#4a7ac8"/><circle cx="9" cy="12" r="1.6" fill="#4a7ac8"/><circle cx="10" cy="5" r="1.6" fill="#4a7ac8"/></svg>
<svg style="position:absolute;left:29.5px;top:158.0px" width="14" height="14" viewBox="0 0 16 16"><path d="M8 1.5 L14.5 6.5 L12 14.5 H4 L1.5 6.5Z" fill="#dcecf8" stroke="#111" stroke-width="1.3"/></svg>
<svg style="position:absolute;left:29.5px;top:179.0px" width="14" height="14" viewBox="0 0 16 16"><rect x="2" y="4" width="12" height="9" fill="#dce8f4" stroke="#111" stroke-width="1.3"/><circle cx="2" cy="4" r="1.6" fill="#4a7ac8"/><circle cx="14" cy="13" r="1.6" fill="#4a7ac8"/></svg>
<svg style="position:absolute;left:29.5px;top:198.0px" width="14" height="14" viewBox="0 0 16 16"><path d="M2 14 C3 7 7 3 14 2" stroke="#111" stroke-width="1.4" fill="none"/><circle cx="2" cy="14" r="1.6" fill="#4a7ac8"/><circle cx="14" cy="2" r="1.6" fill="#4a7ac8"/><circle cx="6" cy="6" r="1.6" fill="#4a7ac8"/></svg>
<svg style="position:absolute;left:29.5px;top:218.0px" width="14" height="14" viewBox="0 0 16 16"><circle cx="8" cy="8" r="6.2" fill="#e8f0f8" stroke="#111" stroke-width="1.4"/><path d="M8 8 L12 4" stroke="#111"/><circle cx="8" cy="8" r="1.6" fill="#2a5aa8"/></svg>
<svg style="position:absolute;left:29.5px;top:238.0px" width="14" height="14" viewBox="0 0 16 16"><path d="M4 13 C1 13 1 9 3 8 C1 5 4 2 7 4 C8 1 13 2 12 5 C15 6 15 10 12 11 C12 14 8 15 7 13 C6 15 4 15 4 13Z" fill="#e8eef4" stroke="#111" stroke-width="1.2"/></svg>
<svg style="position:absolute;left:29.5px;top:258.0px" width="14" height="14" viewBox="0 0 16 16"><path d="M1 14 C5 14 5 6 8 8 C11 10 11 2 15 2" stroke="#111" stroke-width="1.3" fill="none"/></svg>
<svg style="position:absolute;left:29.5px;top:278.0px" width="14" height="14" viewBox="0 0 16 16"><ellipse cx="8" cy="8" rx="6.5" ry="4.5" fill="#dce8f4" stroke="#111" stroke-width="1.4"/><circle cx="1.5" cy="8" r="1.6" fill="#2a5aa8"/><circle cx="14.5" cy="8" r="1.6" fill="#2a5aa8"/></svg>
<svg style="position:absolute;left:29.5px;top:298.0px" width="14" height="14" viewBox="0 0 16 16"><path d="M4 12 C0 10 2 4 8 4 C14 4 16 10 11 12" stroke="#111" stroke-width="1.4" fill="none"/><circle cx="4" cy="12" r="1.6" fill="#2a5aa8"/><circle cx="11" cy="12" r="1.6" fill="#2a5aa8"/></svg>
<svg style="position:absolute;left:29.5px;top:317.7px" width="14" height="14" viewBox="0 0 16 16"><rect x="5" y="1" width="9" height="8" fill="#c8dcf0" stroke="#4a6a98"/><rect x="1.5" y="5" width="9" height="7" fill="#d8f0a0" stroke="#333"/><path d="M5 10 C5 15 12 15 12 10Z" fill="#b0e080" stroke="#333"/><path d="M13 12 L15 15 L11 15Z" fill="#000"/></svg>
<svg style="position:absolute;left:29.5px;top:337.6px" width="14" height="14" viewBox="0 0 16 16"><rect x="5" y="1" width="9" height="8" fill="#c8dcf0" stroke="#4a6a98"/><rect x="1.5" y="5" width="9" height="7" fill="#d8f0a0" stroke="#333"/><path d="M5 10 C5 15 12 15 12 10Z" fill="#b0e080" stroke="#333"/></svg>
<svg style="position:absolute;left:29.5px;top:357.0px" width="14" height="14" viewBox="0 0 16 16"><circle cx="8" cy="9" r="1.3" fill="#333"/></svg>
<svg style="position:absolute;left:29.5px;top:376.7px" width="14" height="14" viewBox="0 0 16 16"><rect x="2.5" y="2.5" width="11" height="11" fill="#d8e8f8" stroke="#1a3a7a" stroke-width="1.4"/><path d="M3 9 L9 3 M3 13 L13 3 M7 13 L13 7" stroke="#4a6ab0"/><circle cx="2.5" cy="2.5" r="1.3" fill="#1a3a7a"/><circle cx="13.5" cy="2.5" r="1.3" fill="#1a3a7a"/><circle cx="2.5" cy="13.5" r="1.3" fill="#1a3a7a"/><circle cx="13.5" cy="13.5" r="1.3" fill="#1a3a7a"/></svg>
<svg style="position:absolute;left:29.5px;top:397.4px" width="14" height="14" viewBox="0 0 16 16"><rect x="2.5" y="2.5" width="11" height="11" fill="#5a6a5a" stroke="#111" stroke-width="1.6"/><path d="M3 13 L13 3" stroke="#8aa88a" stroke-width="3"/><circle cx="2.5" cy="2.5" r="1.4" fill="#111"/><circle cx="13.5" cy="2.5" r="1.4" fill="#111"/><circle cx="2.5" cy="13.5" r="1.4" fill="#111"/><circle cx="13.5" cy="13.5" r="1.4" fill="#111"/></svg>
<svg style="position:absolute;left:29.5px;top:417.0px" width="14" height="14" viewBox="0 0 16 16"><path d="M1.5 3.5 H10 L14.5 8 V13.5 H1.5Z" fill="#d8ecf8" stroke="#2a4a90" stroke-width="1.4"/><circle cx="7" cy="9" r="3" fill="#fff" stroke="#2a4a90"/></svg>
<svg style="position:absolute;left:29.5px;top:436.7px" width="14" height="14" viewBox="0 0 16 16"><rect x="1.5" y="2.5" width="13" height="11" fill="#7a9ae0" stroke="#2a4a90"/><path d="M1.5 6 H14.5 M1.5 9.5 H14.5 M5.5 2.5 V13.5 M10 2.5 V13.5" stroke="#e8f0ff" stroke-width="1.2"/></svg>
<svg style="position:absolute;left:29.5px;top:456.8px" width="14" height="14" viewBox="0 0 16 16"><path d="M2.5 15 L8 1.5 L13.5 15 M4.5 10 H11.5" stroke="#111" stroke-width="1.8" fill="none"/></svg>
<div style="position:absolute;left:825px;top:87px;width:15px;height:476px;background:#ebe9e6"></div>
<div style="position:absolute;left:825px;top:87px;width:13px;height:13px;border:1px solid;border-color:#fff #404040 #404040 #fff;background:#d6d3ce;box-shadow:inset -1px -1px #808080;"></div>
<svg style="position:absolute;left:828px;top:92px;" width="9" height="5" viewBox="0 0 9 5"><path d="M0 5 H9 L4.5 0 Z" fill="#000"/></svg>
<div style="position:absolute;left:825px;top:548px;width:13px;height:13px;border:1px solid;border-color:#fff #404040 #404040 #fff;background:#d6d3ce;box-shadow:inset -1px -1px #808080;"></div>
<svg style="position:absolute;left:828px;top:553px;" width="9" height="5" viewBox="0 0 9 5"><path d="M0 0 H9 L4.5 5 Z" fill="#000"/></svg>
<div style="position:absolute;left:825px;top:468px;width:13px;height:12px;border:1px solid;border-color:#fff #404040 #404040 #fff;background:#d6d3ce;box-shadow:inset -1px -1px #808080;"></div>
<div style="position:absolute;left:843px;top:86px;width:20px;height:199px;border:1px solid;border-color:#fff #808080 #808080 #fff;background:#d6d3ce;"></div>
<div style="position:absolute;left:844px;top:88px;width:20px;height:3px;border-top:2px solid #fff;border-bottom:1px solid #9a9792;box-sizing:border-box"></div>
<div style="position:absolute;left:844px;top:91px;width:20px;height:3px;border-top:2px solid #fff;border-bottom:1px solid #9a9792;box-sizing:border-box"></div>
<div style="position:absolute;left:843px;top:289px;width:20px;height:286px;border:1px solid;border-color:#fff #808080 #808080 #fff;background:#d6d3ce;"></div>
<div style="position:absolute;left:844px;top:291px;width:20px;height:3px;border-top:2px solid #fff;border-bottom:1px solid #9a9792;box-sizing:border-box"></div>
<div style="position:absolute;left:844px;top:294px;width:20px;height:3px;border-top:2px solid #fff;border-bottom:1px solid #9a9792;box-sizing:border-box"></div>
<div style="position:absolute;left:866px;top:86px;width:20px;height:378px;border:1px solid;border-color:#fff #808080 #808080 #fff;background:#d6d3ce;"></div>
<div style="position:absolute;left:867px;top:88px;width:20px;height:3px;border-top:2px solid #fff;border-bottom:1px solid #9a9792;box-sizing:border-box"></div>
<div style="position:absolute;left:867px;top:91px;width:20px;height:3px;border-top:2px solid #fff;border-bottom:1px solid #9a9792;box-sizing:border-box"></div>
<div style="position:absolute;left:866px;top:467px;width:20px;height:108px;border:1px solid;border-color:#fff #808080 #808080 #fff;background:#d6d3ce;"></div>
<div style="position:absolute;left:867px;top:469px;width:20px;height:3px;border-top:2px solid #fff;border-bottom:1px solid #9a9792;box-sizing:border-box"></div>
<div style="position:absolute;left:867px;top:472px;width:20px;height:3px;border-top:2px solid #fff;border-bottom:1px solid #9a9792;box-sizing:border-box"></div>
<div style="position:absolute;left:889px;top:86px;width:21px;height:351px;border:1px solid;border-color:#fff #808080 #808080 #fff;background:#d6d3ce;"></div>
<div style="position:absolute;left:890px;top:88px;width:21px;height:3px;border-top:2px solid #fff;border-bottom:1px solid #9a9792;box-sizing:border-box"></div>
<div style="position:absolute;left:890px;top:91px;width:21px;height:3px;border-top:2px solid #fff;border-bottom:1px solid #9a9792;box-sizing:border-box"></div>
<div style="position:absolute;left:889px;top:440px;width:21px;height:92px;border:1px solid;border-color:#fff #808080 #808080 #fff;background:#d6d3ce;"></div>
<div style="position:absolute;left:890px;top:442px;width:21px;height:3px;border-top:2px solid #fff;border-bottom:1px solid #9a9792;box-sizing:border-box"></div>
<div style="position:absolute;left:890px;top:445px;width:21px;height:3px;border-top:2px solid #fff;border-bottom:1px solid #9a9792;box-sizing:border-box"></div>
<svg style="position:absolute;left:847.0px;top:98.3px" width="14" height="14" viewBox="0 0 16 16"><circle cx="7" cy="7" r="5.6" fill="#b8cce0" stroke="#4a5a7a" stroke-width="1.4"/><rect x="4.5" y="4.5" width="5" height="5" fill="#5a7ab8" stroke="#1a3a80"/><path d="M10.5 10.5 L15 15" stroke="#7a5a3a" stroke-width="2"/></svg>
<svg style="position:absolute;left:847.0px;top:118.7px" width="14" height="14" viewBox="0 0 16 16"><circle cx="7" cy="7" r="5.6" fill="#b8cce0" stroke="#4a5a7a" stroke-width="1.4"/><path d="M4 4 L5.5 5.5 M10 4 L8.5 5.5 M4 10 L5.5 8.5 M10 10 L8.5 8.5" stroke="#1a3a80" stroke-width="1.5"/><path d="M10.5 10.5 L15 15" stroke="#7a5a3a" stroke-width="2"/></svg>
<svg style="position:absolute;left:847.0px;top:138.0px" width="14" height="14" viewBox="0 0 16 16"><circle cx="7" cy="7" r="5.6" fill="#b8cce0" stroke="#4a5a7a" stroke-width="1.4"/><path d="M4.5 4.5 L9.5 9.5 M9.5 4.5 L4.5 9.5" stroke="#1a3a80" stroke-width="1.8"/><path d="M10.5 10.5 L15 15" stroke="#7a5a3a" stroke-width="2"/></svg>
<svg style="position:absolute;left:847.0px;top:157.7px" width="14" height="14" viewBox="0 0 16 16"><circle cx="7" cy="7" r="5.6" fill="#b8cce0" stroke="#4a5a7a" stroke-width="1.4"/><circle cx="7" cy="7" r="2" fill="#1a3a80"/><path d="M4 4 L10 10 M10 4 L4 10" stroke="#1a3a80"/><path d="M10.5 10.5 L15 15" stroke="#7a5a3a" stroke-width="2"/></svg>
<svg style="position:absolute;left:847.0px;top:178.0px" width="14" height="14" viewBox="0 0 16 16"><circle cx="7" cy="7" r="5.6" fill="#b8cce0" stroke="#4a5a7a" stroke-width="1.4"/><path d="M4 7 L7 4 L10 7 L7 10Z" fill="#2aa040" stroke="#1a5a20"/><path d="M10.5 10.5 L15 15" stroke="#7a5a3a" stroke-width="2"/></svg>
<div style="position:absolute;left:846.0px;top:196.5px;width:16px;height:2px;border-top:1px solid #a4a19b;border-bottom:1px solid #fff;box-sizing:border-box"></div>
<svg style="position:absolute;left:847.0px;top:203.5px" width="14" height="14" viewBox="0 0 16 16"><circle cx="7" cy="7" r="5.6" fill="#b8cce0" stroke="#4a5a7a" stroke-width="1.4"/><path d="M4 7 H10 M7 4 V10" stroke="#1a3a80" stroke-width="2"/><path d="M10.5 10.5 L15 15" stroke="#7a5a3a" stroke-width="2"/></svg>
<svg style="position:absolute;left:847.0px;top:223.0px" width="14" height="14" viewBox="0 0 16 16"><circle cx="7" cy="7" r="5.6" fill="#b8cce0" stroke="#4a5a7a" stroke-width="1.4"/><path d="M4 7 H10" stroke="#1a3a80" stroke-width="2"/><path d="M10.5 10.5 L15 15" stroke="#7a5a3a" stroke-width="2"/></svg>
<div style="position:absolute;left:846.0px;top:241.4px;width:16px;height:2px;border-top:1px solid #a4a19b;border-bottom:1px solid #fff;box-sizing:border-box"></div>
<svg style="position:absolute;left:847.0px;top:247.8px" width="14" height="14" viewBox="0 0 16 16"><circle cx="7" cy="7" r="5.6" fill="#b8cce0" stroke="#4a5a7a" stroke-width="1.4"/><path d="M5 3.5 V10 H9 M9 4 C11 5 11 8 9 9" stroke="#1a3a80" stroke-width="1.4" fill="none"/><path d="M10.5 10.5 L15 15" stroke="#7a5a3a" stroke-width="2"/></svg>
<svg style="position:absolute;left:847.0px;top:268.4px" width="14" height="14" viewBox="0 0 16 16"><circle cx="7" cy="7" r="5.6" fill="#b8cce0" stroke="#4a5a7a" stroke-width="1.4"/><path d="M7 3 V11 M3 7 H11" stroke="#1a3a80" stroke-width="1.5"/><path d="M7 2 L5 4.5 H9Z M7 12 L5 9.5 H9Z M2 7 L4.5 5 V9Z M12 7 L9.5 5 V9Z" fill="#1a3a80"/><path d="M10.5 10.5 L15 15" stroke="#7a5a3a" stroke-width="2"/></svg>
<svg style="position:absolute;left:847.0px;top:305.5px" width="14" height="14" viewBox="0 0 16 16"><path d="M2 6 L6 2 H14 V10 L10 14 H2Z" fill="#7a98b8" stroke="#4a6a8a"/><path d="M2 6 L6 2 H14 L10 6Z" fill="#d8e4f0"/><path d="M2 6 H10 V14 M10 6 L14 2" stroke="#e0ecf8" fill="none"/></svg>
<svg style="position:absolute;left:847.0px;top:325.4px" width="14" height="14" viewBox="0 0 16 16"><defs><radialGradient id="gsph" cx="0.35" cy="0.3" r="0.7"><stop offset="0" stop-color="#e8f0f8"/><stop offset="1" stop-color="#5a7898"/></radialGradient></defs><circle cx="8" cy="8" r="7" fill="url(#gsph)"/></svg>
<svg style="position:absolute;left:847.0px;top:345.0px" width="14" height="14" viewBox="0 0 16 16"><path d="M2 4 V13 C2 16 14 16 14 13 V4Z" fill="#7a98b8" stroke="#5a7898"/><path d="M4 6 V13" stroke="#d8e4f0" stroke-width="2"/><ellipse cx="8" cy="4" rx="6" ry="2.5" fill="#c8d8e8" stroke="#5a7898"/></svg>
<svg style="position:absolute;left:847.0px;top:365.5px" width="14" height="14" viewBox="0 0 16 16"><path d="M8 1 L2 13 C2 16 14 16 14 13Z" fill="#7a98b8" stroke="#5a7898"/><path d="M8 2 L5 13" stroke="#e0eaf4" stroke-width="2"/></svg>
<svg style="position:absolute;left:847.0px;top:384.0px" width="14" height="14" viewBox="0 0 16 16"><path d="M2 2 L14 11 L10 15 L2 11Z" fill="#6a88a8" stroke="#4a6a8a"/><path d="M2 2 L14 11 L6 11 L2 9Z" fill="#c8dcf0"/></svg>
<svg style="position:absolute;left:847.0px;top:403.7px" width="14" height="14" viewBox="0 0 16 16"><ellipse cx="8" cy="8" rx="7" ry="6" fill="#6a88a8"/><ellipse cx="7" cy="6.5" rx="5" ry="3.5" fill="#b8cce0"/><ellipse cx="8" cy="8" rx="3" ry="2.2" fill="#2a4a6a"/></svg>
<div style="position:absolute;left:846.0px;top:422px;width:16px;height:2px;border-top:1px solid #a4a19b;border-bottom:1px solid #fff;box-sizing:border-box"></div>
<svg style="position:absolute;left:847.0px;top:430.5px" width="14" height="14" viewBox="0 0 16 16"><path d="M1.5 6.5 H9.5 V14.5 H1.5Z M1.5 6.5 L4.5 3.5 H12.5 L9.5 6.5 M12.5 3.5 V11.5 L9.5 14.5" fill="#fff" stroke="#111" stroke-width="1.2"/><path d="M14 12 V1 M12 3 L14 0.5 L16 3" stroke="#111" stroke-width="1.5" fill="none"/></svg>
<svg style="position:absolute;left:847.0px;top:449.0px" width="14" height="14" viewBox="0 0 16 16"><path d="M2 7 C4 2 12 2 14 7" stroke="#2a6ad0" stroke-width="3" fill="none"/><path d="M3 9 L8 12 L13 9 L8 15Z" fill="#3a7ad8"/></svg>
<div style="position:absolute;left:846.0px;top:467.8px;width:16px;height:2px;border-top:1px solid #a4a19b;border-bottom:1px solid #fff;box-sizing:border-box"></div>
<svg style="position:absolute;left:847.0px;top:474.7px" width="14" height="14" viewBox="0 0 16 16"><path d="M3 3 L10 9" stroke="#333" stroke-width="1.5"/><path d="M3 3 L6 2" stroke="#a04020" stroke-width="2"/><path d="M1 11 L8 7 L15 11 L8 15Z" fill="#a8c8e8" stroke="#4a6a98"/></svg>
<svg style="position:absolute;left:847.0px;top:495.0px" width="14" height="14" viewBox="0 0 16 16"><path d="M4 2 H12 V7 H4Z" fill="#2a6ad0"/><path d="M1 9 H15 L12 13 H4Z" fill="#3a7ad8"/><rect x="7" y="12" width="2" height="3" fill="#1a4a98"/></svg>
<svg style="position:absolute;left:847.0px;top:514.0px" width="14" height="14" viewBox="0 0 16 16"><path d="M1 5 L5 2 L9 5 V13 L5 15 L1 13Z" fill="#3a88d8"/><path d="M7 5 L11 2 L15 5 V13 L11 15 L7 13Z" fill="#5aa0e8"/></svg>
<div style="position:absolute;left:846.0px;top:534px;width:16px;height:2px;border-top:1px solid #a4a19b;border-bottom:1px solid #fff;box-sizing:border-box"></div>
<svg style="position:absolute;left:847.0px;top:541.0px" width="14" height="14" viewBox="0 0 16 16"><rect x="1.5" y="3.5" width="12" height="11" fill="#4a8ad8" stroke="#1a4a98"/><path d="M4 10 L7 13 L12 6" stroke="#fff" stroke-width="2" fill="none"/><path d="M15 1 L10 8" stroke="#c08020" stroke-width="2.2"/></svg>
<svg style="position:absolute;left:847.0px;top:559.0px" width="14" height="14" viewBox="0 0 16 16"><rect x="1.5" y="2.5" width="13" height="12" fill="#6aa8e8" stroke="#1a4a98"/><path d="M3 5 H8 M3 8 H6" stroke="#fff" stroke-width="1.5"/><rect x="8" y="8" width="6" height="6" fill="#2a6ad0"/></svg>
<svg style="position:absolute;left:870.0px;top:98.3px" width="14" height="14" viewBox="0 0 16 16"><path d="M2 8 H12" stroke="#444" stroke-width="2.2"/><rect x="1" y="6" width="4" height="4" fill="#5a6a8a"/><circle cx="12.5" cy="8" r="2.5" fill="#e0f0ff" stroke="#3a6ab8" stroke-width="1.2"/></svg>
<svg style="position:absolute;left:870.0px;top:118.7px" width="14" height="14" viewBox="0 0 16 16"><path d="M4 14 V6 H12" stroke="#333" stroke-width="1.5" fill="none"/><path d="M2 12 H6 V15 H2Z" fill="#4a5a7a"/><circle cx="12.5" cy="5" r="2.5" fill="#e0f0ff" stroke="#3a6ab8" stroke-width="1.2"/></svg>
<div style="position:absolute;left:869.0px;top:136px;width:16px;height:2px;border-top:1px solid #a4a19b;border-bottom:1px solid #fff;box-sizing:border-box"></div>
<svg style="position:absolute;left:870.0px;top:143.5px" width="14" height="14" viewBox="0 0 16 16"><path d="M3 13 L13 3" stroke="#111" stroke-width="1.5"/><circle cx="3" cy="13" r="2.3" fill="#fff" stroke="#3a6ab8" stroke-width="1.2"/><circle cx="13" cy="3" r="2.3" fill="#fff" stroke="#3a6ab8" stroke-width="1.2"/></svg>
<svg style="position:absolute;left:870.0px;top:163.0px" width="14" height="14" viewBox="0 0 16 16"><path d="M1 15 L15 1" stroke="#111" stroke-width="1.5"/><circle cx="8" cy="8" r="2.3" fill="#fff" stroke="#3a6ab8" stroke-width="1.2"/></svg>
<svg style="position:absolute;left:870.0px;top:183.0px" width="14" height="14" viewBox="0 0 16 16"><path d="M2 2 L14 14 M14 2 L2 14" stroke="#111" stroke-width="1.6"/><circle cx="8" cy="8" r="2" fill="#fff" stroke="#3a6ab8"/></svg>
<svg style="position:absolute;left:870.0px;top:203.5px" width="14" height="14" viewBox="0 0 16 16"><path d="M2 2 L6 6 M10 10 L14 14 M14 2 L10 6 M6 10 L2 14" stroke="#111" stroke-width="1.6"/><circle cx="8" cy="8" r="2" fill="#fff" stroke="#3a6ab8"/></svg>
<svg style="position:absolute;left:870.0px;top:223.0px" width="14" height="14" viewBox="0 0 16 16"><path d="M1 8 H7" stroke="#333" stroke-width="2"/><path d="M9 8 H15" stroke="#555" stroke-width="1.5" stroke-dasharray="2 1.5"/></svg>
<div style="position:absolute;left:869.0px;top:241px;width:16px;height:2px;border-top:1px solid #a4a19b;border-bottom:1px solid #fff;box-sizing:border-box"></div>
<svg style="position:absolute;left:870.0px;top:248.8px" width="14" height="14" viewBox="0 0 16 16"><circle cx="8" cy="8" r="6" fill="#e8f0f8" stroke="#111" stroke-width="1.5"/><circle cx="8" cy="8" r="2" fill="#fff" stroke="#3a6ab8" stroke-width="1.2"/></svg>
<svg style="position:absolute;left:870.0px;top:268.4px" width="14" height="14" viewBox="0 0 16 16"><circle cx="8" cy="8" r="5.5" fill="#fff" stroke="#111" stroke-width="1.3"/><circle cx="8" cy="2.5" r="1.8" fill="#fff" stroke="#3a6ab8"/><circle cx="8" cy="13.5" r="1.8" fill="#fff" stroke="#3a6ab8"/><circle cx="2.5" cy="8" r="1.8" fill="#fff" stroke="#3a6ab8"/><circle cx="13.5" cy="8" r="1.8" fill="#fff" stroke="#3a6ab8"/></svg>
<svg style="position:absolute;left:870.0px;top:289.0px" width="14" height="14" viewBox="0 0 16 16"><circle cx="8" cy="9" r="5.5" fill="#fff" stroke="#111" stroke-width="1.5"/><path d="M2 2 L8 3" stroke="#111" stroke-width="1.3"/><circle cx="4" cy="3" r="2" fill="#fff" stroke="#3a6ab8"/></svg>
<div style="position:absolute;left:869.0px;top:307px;width:16px;height:2px;border-top:1px solid #a4a19b;border-bottom:1px solid #fff;box-sizing:border-box"></div>
<svg style="position:absolute;left:870.0px;top:314.7px" width="14" height="14" viewBox="0 0 16 16"><path d="M1 13 H15 M8 13 V2" stroke="#111" stroke-width="1.5"/><circle cx="8" cy="13" r="2" fill="#fff" stroke="#3a6ab8"/></svg>
<svg style="position:absolute;left:870.0px;top:333.6px" width="14" height="14" viewBox="0 0 16 16"><path d="M2 13 L12 3 M5 15 L15 5" stroke="#111" stroke-width="1.5"/></svg>
<svg style="position:absolute;left:870.0px;top:355.0px" width="14" height="14" viewBox="0 0 16 16"><rect x="3" y="2" width="8" height="6" fill="#d0e8a0" stroke="#333"/><circle cx="11" cy="10" r="3.5" fill="#c0e090" stroke="#333"/><circle cx="3" cy="10" r="2" fill="#fff" stroke="#3a6ab8"/></svg>
<svg style="position:absolute;left:870.0px;top:373.8px" width="14" height="14" viewBox="0 0 16 16"><circle cx="8" cy="8" r="2.5" fill="#fff" stroke="#3a6ab8" stroke-width="1.2"/></svg>
<div style="position:absolute;left:869.0px;top:392px;width:16px;height:2px;border-top:1px solid #a4a19b;border-bottom:1px solid #fff;box-sizing:border-box"></div>
<svg style="position:absolute;left:870.0px;top:399.5px" width="14" height="14" viewBox="0 0 16 16"><path d="M2 14 L14 4" stroke="#111" stroke-width="1.5"/><circle cx="11" cy="6" r="2.5" fill="#fff" stroke="#3a6ab8" stroke-width="1.2"/></svg>
<svg style="position:absolute;left:870.0px;top:419.0px" width="14" height="14" viewBox="0 0 16 16"><path d="M3 12 C3 3 13 3 13 12" stroke="#5a8a3a" stroke-width="2.5" fill="none"/><path d="M2 14 L14 2" stroke="#d02020" stroke-width="2"/><rect x="12" y="12" width="3" height="3" fill="#333"/></svg>
<div style="position:absolute;left:869.0px;top:438px;width:16px;height:2px;border-top:1px solid #a4a19b;border-bottom:1px solid #fff;box-sizing:border-box"></div>
<svg style="position:absolute;left:870.0px;top:444.8px" width="14" height="14" viewBox="0 0 16 16"><path d="M3 14 V7 C3 1 12 1 12 7 V14 H9 V7 C9 4 6 4 6 7 V14Z" fill="#c02030" stroke="#801020" stroke-width="0.8"/><rect x="12" y="12" width="3.5" height="3.5" fill="#fff" stroke="#3a6ab8"/></svg>
<svg style="position:absolute;left:870.0px;top:481.0px" width="14" height="14" viewBox="0 0 16 16"><path d="M3 1 V13 H15" stroke="#111" stroke-width="1.5" fill="none"/><path d="M1 4 L3 0.5 L5 4 M12 11 L15.5 13 L12 15" stroke="#111" stroke-width="1.2" fill="none"/><path d="M4 12 L12 5" stroke="#3a6ab8" stroke-width="1.3"/></svg>
<svg style="position:absolute;left:870.0px;top:500.0px" width="14" height="14" viewBox="0 0 16 16"><path d="M3 1 V13 H15" stroke="#111" stroke-width="1.5" fill="none"/><rect x="5" y="3" width="9" height="7" fill="#dce8f4" stroke="#1a3a80" stroke-width="1.3"/></svg>
<div style="position:absolute;left:869.0px;top:518px;width:16px;height:2px;border-top:1px solid #a4a19b;border-bottom:1px solid #fff;box-sizing:border-box"></div>
<svg style="position:absolute;left:870.0px;top:526.0px" width="14" height="14" viewBox="0 0 16 16"><path d="M3 1 V13 H15" stroke="#111" stroke-width="1.5" fill="none"/><path d="M12 4 C8 3 6 6 7 9 L5 8 L7 12 L9 8 L8 9 C8 7 10 5 12 6Z" fill="#1a3a80"/></svg>
<div style="position:absolute;left:869.0px;top:544.8px;width:16px;height:2px;border-top:1px solid #a4a19b;border-bottom:1px solid #fff;box-sizing:border-box"></div>
<svg style="position:absolute;left:870.0px;top:551.6px" width="14" height="14" viewBox="0 0 16 16"><path d="M3 1 V13 H15" stroke="#111" stroke-width="1.5" fill="none"/><circle cx="10" cy="7" r="4.5" fill="#3a8a5a" stroke="#1a3a80" stroke-width="1.2"/><path d="M7 5 C9 6 11 5 13 7" stroke="#a8e0c0"/></svg>
<svg style="position:absolute;left:870.0px;top:567.6px" width="14" height="14" viewBox="0 0 16 16"><path d="M4 15 V4 M2 6 L4 3 L6 6" stroke="#111" stroke-width="1.5" fill="none"/><rect x="7" y="8" width="8" height="7" fill="#1a4a98"/></svg>
<svg style="position:absolute;left:893.5px;top:98.0px" width="14" height="14" viewBox="0 0 16 16"><path d="M3 12 L12 2 L15 5 L6 14Z" fill="#f0e070" stroke="#806a20"/><path d="M3 12 L6 9 L9 12 L6 14Z" fill="#e8a0b0" stroke="#a05060"/><path d="M1 15 H15" stroke="#333"/></svg>
<svg style="position:absolute;left:893.5px;top:118.7px" width="14" height="14" viewBox="0 0 16 16"><circle cx="5" cy="5" r="3.5" fill="#e8f0f8" stroke="#111" stroke-width="1.3"/><circle cx="10" cy="11" r="3.5" fill="#e8f0f8" stroke="#111" stroke-width="1.3"/><path d="M9 2 C12 2 14 4 13 7" stroke="#1a3a80" stroke-width="1.5" fill="none"/></svg>
<svg style="position:absolute;left:893.5px;top:138.0px" width="14" height="14" viewBox="0 0 16 16"><path d="M7 2 L1 14 H7Z" fill="#c8d8e8" stroke="#111" stroke-width="1.2"/><path d="M9 2 L15 14 H9Z" fill="#e8f0f8" stroke="#111" stroke-width="1.2"/><path d="M8 1 V15" stroke="#333" stroke-dasharray="2 1"/></svg>
<svg style="position:absolute;left:893.5px;top:158.0px" width="14" height="14" viewBox="0 0 16 16"><path d="M2 13 V9 C2 5 6 4 8 6 C9 2 14 3 13 8 C15 9 15 13 13 13Z" fill="#c8dcf0" stroke="#111" stroke-width="1.3"/><path d="M4 12 H12" stroke="#3a6ab8" stroke-width="1.5"/></svg>
<svg style="position:absolute;left:893.5px;top:178.0px" width="14" height="14" viewBox="0 0 16 16"><rect x="2" y="2" width="5" height="5" fill="#fff" stroke="#111" stroke-width="1.3"/><rect x="9" y="2" width="5" height="5" fill="#fff" stroke="#111" stroke-width="1.3"/><rect x="2" y="9" width="5" height="5" fill="#fff" stroke="#111" stroke-width="1.3"/><rect x="9" y="9" width="5" height="5" fill="#fff" stroke="#111" stroke-width="1.3"/></svg>
<svg style="position:absolute;left:893.5px;top:198.3px" width="14" height="14" viewBox="0 0 16 16"><path d="M8 1 V15 M1 8 H15" stroke="#2a5aa8" stroke-width="2.2"/><path d="M8 0 L5 4 H11Z M8 16 L5 12 H11Z M0 8 L4 5 V11Z M16 8 L12 5 V11Z" fill="#2a5aa8"/></svg>
<svg style="position:absolute;left:893.5px;top:217.9px" width="14" height="14" viewBox="0 0 16 16"><path d="M5 3 C1 5 1 12 6 14 C11 16 15 11 13 6 C12 4 10 3 8 3" stroke="#2a5aa8" stroke-width="2" fill="none"/><path d="M8 0 L4 3 L8 6Z" fill="#2a5aa8"/></svg>
<svg style="position:absolute;left:893.5px;top:238.5px" width="14" height="14" viewBox="0 0 16 16"><rect x="1.5" y="1.5" width="13" height="13" fill="#fff" stroke="#111" stroke-width="1.2"/><rect x="1.5" y="7.5" width="7" height="7" fill="#dce8f4" stroke="#111" stroke-dasharray="1.5 1"/></svg>
<svg style="position:absolute;left:893.5px;top:258.0px" width="14" height="14" viewBox="0 0 16 16"><path d="M2 2 H8 L14 14 H2Z" fill="#a8c8e8" stroke="#111" stroke-width="1.3"/><path d="M5 2 V14" stroke="#fff" stroke-width="1.5"/></svg>
<svg style="position:absolute;left:893.5px;top:277.6px" width="14" height="14" viewBox="0 0 16 16"><path d="M2 8 H7" stroke="#333" stroke-width="1.3"/><path d="M9 8 H14" stroke="#555" stroke-dasharray="1.5 1"/><path d="M4 14 L12 2" stroke="#2a5aa8" stroke-width="1.3"/></svg>
<svg style="position:absolute;left:893.5px;top:298.0px" width="14" height="14" viewBox="0 0 16 16"><path d="M2 8 H7" stroke="#333" stroke-width="1.3"/><path d="M8 8 H11" stroke="#555" stroke-dasharray="1.5 1"/><path d="M9 14 L14 3" stroke="#2a5aa8" stroke-width="1.3"/></svg>
<svg style="position:absolute;left:893.5px;top:317.0px" width="14" height="14" viewBox="0 0 16 16"><rect x="1.5" y="3.5" width="13" height="11" fill="#dce8f4" stroke="#111" stroke-width="1.3"/><rect x="6" y="1" width="4" height="4" fill="#d6d3ce"/></svg>
<svg style="position:absolute;left:893.5px;top:336.7px" width="14" height="14" viewBox="0 0 16 16"><path d="M6 3 H1.5 V14.5 H14.5 V3 H10" fill="#dce8f4" stroke="#111" stroke-width="1.3"/><path d="M6 1 V5 M10 1 V5" stroke="#3a6ab8" stroke-width="1.5"/></svg>
<svg style="position:absolute;left:893.5px;top:357.3px" width="14" height="14" viewBox="0 0 16 16"><path d="M1 8 H6 M10 8 H15" stroke="#111" stroke-width="1.5"/><path d="M7 8 L4 5 V11Z M9 8 L12 5 V11Z" fill="#1a3a80"/></svg>
<svg style="position:absolute;left:893.5px;top:376.9px" width="14" height="14" viewBox="0 0 16 16"><path d="M2 15 V3 H14" stroke="#111" stroke-width="1.4" fill="none"/><path d="M2 9 L8 3" stroke="#3a6ab8" stroke-width="1.5"/></svg>
<svg style="position:absolute;left:893.5px;top:396.5px" width="14" height="14" viewBox="0 0 16 16"><path d="M2 15 V10 C2 5 6 3 14 3" stroke="#1a3a80" stroke-width="1.6" fill="none"/><path d="M2 10 V3 H9" stroke="#111" stroke-width="1" fill="none"/></svg>
<svg style="position:absolute;left:893.5px;top:418.0px" width="14" height="14" viewBox="0 0 16 16"><path d="M2 12 L12 2 M3 4 L13 13" stroke="#d04020" stroke-width="2.5"/><circle cx="8" cy="8" r="3" fill="#f0c020"/><circle cx="13" cy="3" r="1.5" fill="#f0a020"/></svg>
<svg style="position:absolute;left:893.5px;top:453.3px" width="14" height="14" viewBox="0 0 16 16"><rect x="1.5" y="1.5" width="9" height="9" fill="#5a8ad0" stroke="#1a3a80"/><rect x="5.5" y="5.5" width="9" height="9" fill="#b8d0ec" stroke="#4a6a98"/></svg>
<svg style="position:absolute;left:893.5px;top:472.5px" width="14" height="14" viewBox="0 0 16 16"><rect x="1.5" y="1.5" width="7" height="7" fill="#b8d0ec" stroke="#4a6a98"/><rect x="5.5" y="5.5" width="7" height="7" fill="#5a8ad0" stroke="#1a3a80"/><rect x="8.5" y="8.5" width="6" height="6" fill="#b8d0ec" stroke="#4a6a98"/></svg>
<svg style="position:absolute;left:893.5px;top:492.8px" width="14" height="14" viewBox="0 0 16 16"><rect x="5.5" y="5.5" width="9" height="9" fill="#b8d0ec" stroke="#4a6a98"/><rect x="1.5" y="1.5" width="9" height="9" fill="#5a8ad0" stroke="#1a3a80"/></svg>
<svg style="position:absolute;left:893.5px;top:512.0px" width="14" height="14" viewBox="0 0 16 16"><rect x="5.5" y="5.5" width="9" height="9" fill="#b8d0ec" stroke="#4a6a98"/><rect x="1.5" y="1.5" width="9" height="9" fill="#5a8ad0" stroke="#1a3a80"/><rect x="7" y="8" width="6" height="5" fill="#d8e8f8"/></svg>
<div style="position:absolute;left:50px;top:563px;width:511px;height:14px;background:#d6d3ce"></div>
<div style="position:absolute;left:50px;top:564px;width:66px;height:13px;background:#c8c6c2"></div>
<div style="position:absolute;left:51px;top:565px;width:15px;height:11px;background:#e2e0dc;border:1px solid;border-color:#fff #a8a6a2 #a8a6a2 #fff;box-sizing:border-box"></div>
<div style="position:absolute;left:67px;top:565px;width:15px;height:11px;background:#e2e0dc;border:1px solid;border-color:#fff #a8a6a2 #a8a6a2 #fff;box-sizing:border-box"></div>
<div style="position:absolute;left:83px;top:565px;width:15px;height:11px;background:#e2e0dc;border:1px solid;border-color:#fff #a8a6a2 #a8a6a2 #fff;box-sizing:border-box"></div>
<div style="position:absolute;left:99px;top:565px;width:15px;height:11px;background:#e2e0dc;border:1px solid;border-color:#fff #a8a6a2 #a8a6a2 #fff;box-sizing:border-box"></div>
<svg style="position:absolute;left:55px;top:566px;" width="10" height="10" viewBox="0 0 10 10"><path d="M1.5 1 V9" stroke="#000" stroke-width="1.6"/><path d="M8 1 L2.5 5 L8 9Z" fill="#000"/></svg>
<svg style="position:absolute;left:71px;top:566px;" width="10" height="10" viewBox="0 0 10 10"><path d="M7 1 L2 5 L7 9 Z" fill="#000"/></svg>
<svg style="position:absolute;left:87px;top:566px;" width="10" height="10" viewBox="0 0 10 10"><path d="M3 1 L8 5 L3 9 Z" fill="#000"/></svg>
<svg style="position:absolute;left:103px;top:566px;" width="10" height="10" viewBox="0 0 10 10"><path d="M8.5 1 V9" stroke="#000" stroke-width="1.6"/><path d="M2 1 L7.5 5 L2 9Z" fill="#000"/></svg>
<svg style="position:absolute;left:115px;top:563px;" width="120" height="14" viewBox="0 0 120 14"><path d="M37.7 0 L40.6 12 H72.6 L77.6 0" fill="#d6d3ce" stroke="#000" stroke-width="1.2"/><path d="M77.6 0 L79 12 H111 L116 0" fill="#d6d3ce" stroke="#000" stroke-width="1.2"/><path d="M4.3 0 L8.5 12.5 H33.5 L38.4 0Z" fill="#000"/></svg>
<div style="position:absolute;left:125.5px;top:564px;font-family:'Liberation Sans', sans-serif;font-size:11px;line-height:1;color:#fff;white-space:nowrap;font-weight:bold">模型</div>
<div style="position:absolute;left:157.5px;top:564px;font-family:'Liberation Sans', sans-serif;font-size:11px;line-height:1;color:#000;white-space:nowrap;">布局1</div>
<div style="position:absolute;left:194px;top:564px;font-family:'Liberation Sans', sans-serif;font-size:11px;line-height:1;color:#000;white-space:nowrap;">布局2</div>
<div style="position:absolute;left:561px;top:563px;width:264px;height:14px;background:#ebe9e6"></div>
<div style="position:absolute;left:561px;top:563px;width:4px;height:12px;border:1px solid;border-color:#fff #808080 #808080 #fff;background:#d6d3ce;"></div>
<div style="position:absolute;left:567px;top:563px;width:12px;height:12px;border:1px solid;border-color:#fff #404040 #404040 #fff;background:#d6d3ce;box-shadow:inset -1px -1px #808080;"></div>
<svg style="position:absolute;left:571px;top:566px;" width="5" height="8" viewBox="0 0 5 8"><path d="M5 0 V8 L0 4 Z" fill="#000"/></svg>
<div style="position:absolute;left:744px;top:563px;width:12px;height:12px;border:1px solid;border-color:#fff #404040 #404040 #fff;background:#d6d3ce;box-shadow:inset -1px -1px #808080;"></div>
<div style="position:absolute;left:811px;top:563px;width:12px;height:12px;border:1px solid;border-color:#fff #404040 #404040 #fff;background:#d6d3ce;box-shadow:inset -1px -1px #808080;"></div>
<svg style="position:absolute;left:816px;top:566px;" width="5" height="8" viewBox="0 0 5 8"><path d="M0 0 V8 L5 4 Z" fill="#000"/></svg>
<div style="position:absolute;left:2px;top:579px;width:911px;height:1px;background:#fafafa"></div>
<div style="position:absolute;left:2px;top:583px;width:911px;height:1.6px;background:#303030"></div>
<div style="position:absolute;left:7px;top:592px;width:3px;height:36px;border-left:1px solid #fff;border-right:1px solid #808080;box-sizing:border-box"></div>
<div style="position:absolute;left:11px;top:592px;width:3px;height:36px;border-left:1px solid #fff;border-right:1px solid #808080;box-sizing:border-box"></div>
<div style="position:absolute;left:16px;top:588px;width:889px;height:44px;background:#fff;border-left:2px solid #404040;border-top:2px solid #404040;box-sizing:border-box"></div>
<div style="position:absolute;left:18px;top:617px;width:872px;height:1px;background:#808080"></div>
<div style="position:absolute;left:889px;top:617px;width:16px;height:15px;background:#d6d3ce"></div>
<div style="position:absolute;left:904px;top:588px;width:2px;height:44px;background:#d6d3ce"></div>
<div style="position:absolute;left:19.5px;top:590px;font-family:'Liberation Mono', monospace;font-size:12px;line-height:1;color:#000;white-space:nowrap;">命令：</div>
<div style="position:absolute;left:19.5px;top:602px;font-family:'Liberation Mono', monospace;font-size:12px;line-height:1;color:#000;white-space:nowrap;">命令： _pasteclip 指定插入点：</div>
<div style="position:absolute;left:19.5px;top:620px;font-family:'Liberation Mono', monospace;font-size:12px;line-height:1;color:#000;white-space:nowrap;">命令：</div>
<div style="position:absolute;left:890px;top:589px;width:14px;height:28px;background:#ebe9e6"></div>
<div style="position:absolute;left:890px;top:589px;width:12px;height:12px;border:1px solid;border-color:#fff #404040 #404040 #fff;background:#d6d3ce;box-shadow:inset -1px -1px #808080;"></div>
<svg style="position:absolute;left:893px;top:594px;" width="8" height="4" viewBox="0 0 8 4"><path d="M0 4 H8 L4 0 Z" fill="#000"/></svg>
<div style="position:absolute;left:890px;top:603px;width:12px;height:12px;border:1px solid;border-color:#fff #404040 #404040 #fff;background:#d6d3ce;box-shadow:inset -1px -1px #808080;"></div>
<svg style="position:absolute;left:893px;top:608px;" width="8" height="4" viewBox="0 0 8 4"><path d="M0 0 H8 L4 4 Z" fill="#000"/></svg>
<div style="position:absolute;left:834px;top:618px;width:56px;height:13px;background:#ebe9e6"></div>
<div style="position:absolute;left:834px;top:618px;width:12px;height:11px;border:1px solid;border-color:#fff #404040 #404040 #fff;background:#d6d3ce;box-shadow:inset -1px -1px #808080;"></div>
<svg style="position:absolute;left:839px;top:621px;" width="4" height="7" viewBox="0 0 4 7"><path d="M4 0 V7 L0 3.5 Z" fill="#000"/></svg>
<div style="position:absolute;left:848px;top:618px;width:12px;height:11px;border:1px solid;border-color:#fff #404040 #404040 #fff;background:#d6d3ce;box-shadow:inset -1px -1px #808080;"></div>
<div style="position:absolute;left:875px;top:618px;width:12px;height:11px;border:1px solid;border-color:#fff #404040 #404040 #fff;background:#d6d3ce;box-shadow:inset -1px -1px #808080;"></div>
<svg style="position:absolute;left:880px;top:621px;" width="4" height="7" viewBox="0 0 4 7"><path d="M0 0 V7 L4 3.5 Z" fill="#000"/></svg>
<div style="position:absolute;left:7px;top:638px;width:224px;height:15px;border:1px solid;border-color:#808080 #fff #fff #808080;background:#d6d3ce;box-shadow:inset 1px 1px #404040;box-shadow:none"></div>
<div style="position:absolute;left:8.3px;top:642px;font-family:'Liberation Mono', monospace;font-size:10.3px;line-height:1;color:#000;white-space:nowrap;transform:scaleX(0.87);transform-origin:0 0;font-weight:bold">1387.6462, 875.9858, 0.0000</div>
<div style="position:absolute;left:237px;top:638px;width:24px;height:16px;border:1px solid;border-color:#fff #a09d98 #a09d98 #fff;background:#d6d3ce;box-sizing:border-box"></div>
<div style="position:absolute;left:239px;top:641px;font-family:'Liberation Sans', sans-serif;font-size:10.5px;line-height:1;color:#000;white-space:nowrap;font-weight:bold;color:#111">捕捉</div>
<div style="position:absolute;left:265.5px;top:638px;width:24px;height:16px;border:1px solid;border-color:#fff #a09d98 #a09d98 #fff;background:#d6d3ce;box-sizing:border-box"></div>
<div style="position:absolute;left:267.5px;top:641px;font-family:'Liberation Sans', sans-serif;font-size:10.5px;line-height:1;color:#000;white-space:nowrap;font-weight:bold;color:#111">栅格</div>
<div style="position:absolute;left:294px;top:638px;width:25px;height:16px;border:1px solid;border-color:#fff #a09d98 #a09d98 #fff;background:#d6d3ce;box-sizing:border-box"></div>
<div style="position:absolute;left:296px;top:641px;font-family:'Liberation Sans', sans-serif;font-size:10.5px;line-height:1;color:#000;white-space:nowrap;font-weight:bold;color:#111">正交</div>
<div style="position:absolute;left:323px;top:638px;width:25px;height:16px;border:1px solid;border-color:#404040 #fff #fff #404040;box-shadow:inset 1px 1px #808080;background:#dedbd6;box-sizing:border-box"></div>
<div style="position:absolute;left:325px;top:641px;font-family:'Liberation Sans', sans-serif;font-size:10.5px;line-height:1;color:#000;white-space:nowrap;font-weight:bold;color:#111">极轴</div>
<div style="position:absolute;left:352px;top:638px;width:49px;height:16px;border:1px solid;border-color:#404040 #fff #fff #404040;box-shadow:inset 1px 1px #808080;background:#dedbd6;box-sizing:border-box"></div>
<div style="position:absolute;left:354px;top:641px;font-family:'Liberation Sans', sans-serif;font-size:10.5px;line-height:1;color:#000;white-space:nowrap;font-weight:bold;color:#111">对象捕捉</div>
<div style="position:absolute;left:402px;top:638px;width:48px;height:16px;border:1px solid;border-color:#404040 #fff #fff #404040;box-shadow:inset 1px 1px #808080;background:#dedbd6;box-sizing:border-box"></div>
<div style="position:absolute;left:404px;top:641px;font-family:'Liberation Sans', sans-serif;font-size:10.5px;line-height:1;color:#000;white-space:nowrap;font-weight:bold;color:#111">对象追踪</div>
<div style="position:absolute;left:453px;top:638px;width:21px;height:16px;border:1px solid;border-color:#fff #a09d98 #a09d98 #fff;background:#d6d3ce;box-sizing:border-box"></div>
<div style="position:absolute;left:454.5px;top:641px;font-family:'Liberation Mono', monospace;font-size:12px;line-height:1;color:#000;white-space:nowrap;transform:scaleX(0.82);transform-origin:0 0;font-weight:bold">DYN</div>
<div style="position:absolute;left:477px;top:638px;width:25px;height:16px;border:1px solid;border-color:#404040 #fff #fff #404040;box-shadow:inset 1px 1px #808080;background:#dedbd6;box-sizing:border-box"></div>
<div style="position:absolute;left:479px;top:641px;font-family:'Liberation Sans', sans-serif;font-size:10.5px;line-height:1;color:#000;white-space:nowrap;font-weight:bold;color:#111">线宽</div>
<div style="position:absolute;left:506px;top:638px;width:24.5px;height:16px;border:1px solid;border-color:#404040 #fff #fff #404040;box-shadow:inset 1px 1px #808080;background:#dedbd6;box-sizing:border-box"></div>
<div style="position:absolute;left:508px;top:641px;font-family:'Liberation Sans', sans-serif;font-size:10.5px;line-height:1;color:#000;white-space:nowrap;font-weight:bold;color:#111">模型</div>
<div style="position:absolute;left:843px;top:638px;width:38px;height:15px;border:1px solid;border-color:#808080 #fff #fff #808080;background:#d6d3ce;box-shadow:inset 1px 1px #404040;box-shadow:none;border-color:#808080 #fff #fff #808080"></div>
<svg style="position:absolute;left:848px;top:639px;" width="16" height="16" viewBox="0 0 16 16"><path d="M3 1 L8 6 M6 1 L3 5" stroke="#3a6ab8" stroke-width="1.6"/><path d="M8.5 4 L15 15 H2Z" fill="#f0e020" stroke="#8a7a10"/><rect x="7.8" y="8" width="1.6" height="4" fill="#000"/><rect x="7.8" y="12.8" width="1.6" height="1.5" fill="#000"/></svg>
<svg style="position:absolute;left:865px;top:639px;" width="16" height="16" viewBox="0 0 16 16"><path d="M7 7 V4 C7 1 13 1 13 4 V6" stroke="#c8c020" stroke-width="2.2" fill="none"/><rect x="1.5" y="7" width="9" height="8" rx="1" fill="#d8d020" stroke="#7a7010"/></svg>
<svg style="position:absolute;left:888px;top:645px;" width="8" height="5" viewBox="0 0 8 5"><path d="M0 0 H8 L4 5Z" fill="#000"/></svg>
<svg style="position:absolute;left:900px;top:641px;" width="13" height="14" viewBox="0 0 13 14"><path d="M12 2 L1 13 M12 6 L5 13 M12 10 L9 13" stroke="#fff" stroke-width="1"/><path d="M12.5 3 L2 13.5 M12.5 7 L6 13.5 M12.5 11 L10 13.5" stroke="#808080" stroke-width="1"/></svg>
</body></html>
